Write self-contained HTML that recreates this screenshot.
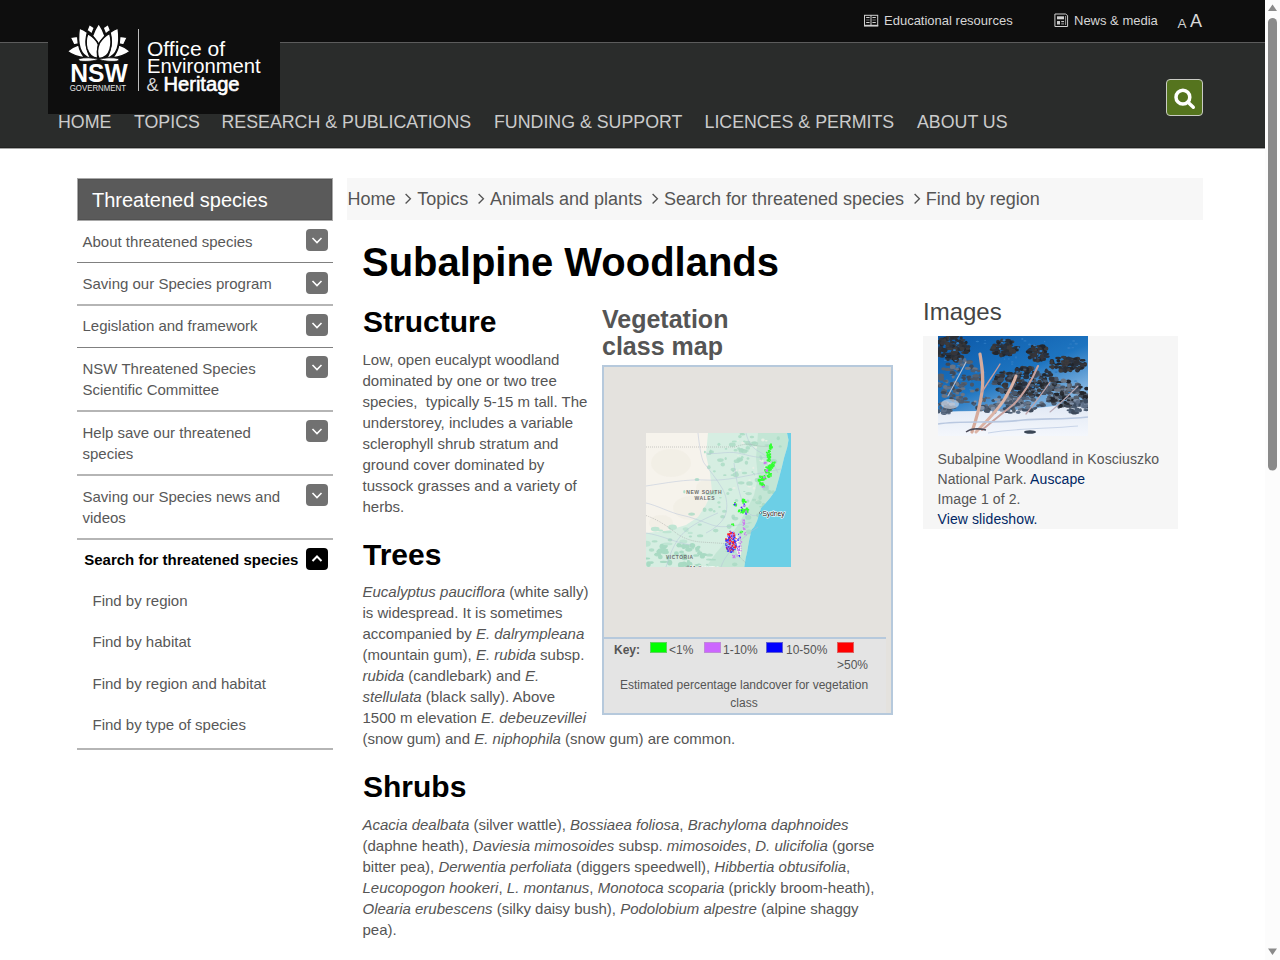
<!DOCTYPE html>
<html><head><meta charset="utf-8">
<style>
*{box-sizing:border-box;margin:0;padding:0}
html,body{width:1280px;height:960px;overflow:hidden;background:#fff}
body{position:relative;font-family:"Liberation Sans",sans-serif;color:#555}
.abs{position:absolute}
#topbar{position:absolute;left:0;top:0;width:1265px;height:42px;background:#0e0e0e}
#nav{position:absolute;left:0;top:42px;width:1265px;height:106px;background:#2a2c2b;border-top:1px solid #5c5c5c;border-bottom:1px solid #212221;box-shadow:0 1px 0 #a5a6a5}
#logo{position:absolute;left:48px;top:0;width:232px;height:114px;background:#0e0e0e}
.tl{position:absolute;top:13px;font-size:13px;color:#d6d6d6;white-space:nowrap;line-height:16px}
.nv{position:absolute;top:112px;font-size:17.8px;color:#cbcbcb;white-space:nowrap;line-height:20px;letter-spacing:0}
#search{position:absolute;left:1166px;top:79px;width:37px;height:37px;background:#55741e;border:1px solid #c9cbc4;border-radius:4px}
#scroll{position:absolute;left:1265px;top:0;width:15px;height:960px;background:#fcfcfc}
/* sidebar */
.sb{white-space:nowrap}
.si{font-size:15px;line-height:21.43px;color:#585858}
.tg{position:absolute;left:306px;width:22px;height:22px;background:#717171;border-radius:4px}
.tg svg{position:absolute;left:0;top:0}
/* breadcrumb */
#bc{position:absolute;padding-left:0.5px;left:347px;top:178px;width:855.5px;height:41.5px;background:#f7f7f7;font-size:18px;line-height:43px;color:#555;white-space:nowrap;overflow:visible}
#bc span.c{display:inline-block;width:8px;height:1px;margin:0 5px 0 8.75px;position:relative}
#bc span.c svg{position:absolute;left:0;top:-11px}
h1{position:absolute;left:362px;top:236px;font-size:40px;line-height:50px;color:#000;font-weight:bold;white-space:nowrap}
.h2{position:absolute;font-size:30px;line-height:33px;color:#000;font-weight:bold;white-space:nowrap}
.p{position:absolute;font-size:15px;line-height:21px;color:#555}
.p i{font-style:italic}
#mapbox{position:absolute;left:602px;top:365px;width:291px;height:350px;border:2px solid #b6c9dc;background:#e4e2de}
#legend{position:absolute;left:0;top:270px;width:282px;height:76px;background:#e4e4e4;border-top:2px solid #b6c9dc}
.h3{position:absolute;font-size:25px;line-height:27px;color:#555;font-weight:bold}
#imgbox{position:absolute;left:922.5px;top:336px;width:255px;height:193px;background:#f6f6f6}
a{color:#002664;text-decoration:none}
</style></head><body>
<div id="topbar"></div>
<div id="nav"></div>
<div id="logo"></div>
<svg class="abs" style="left:62px;top:20px" width="74" height="74" viewBox="0 0 960 960">
<text x="108" y="805" font-family="Liberation Sans" font-weight="bold" font-size="335" fill="#fff" textLength="745" lengthAdjust="spacingAndGlyphs">NSW</text>
<text x="100" y="918" font-family="Liberation Sans" font-size="108" fill="#e6e6e6" textLength="730" lengthAdjust="spacingAndGlyphs">GOVERNMENT</text>
</svg>
<svg class="abs" style="left:64px;top:20px" width="70" height="44.01" viewBox="0 0 1280 805">
<g fill="#fff" stroke="#0e0e0e" stroke-width="26" stroke-linejoin="round">
<path d="M60,572 C120,520 190,480 268,455 C285,540 320,620 380,690 C260,680 150,640 60,572Z"/>
<path d="M1210,572 C1150,520 1080,480 1002,455 C985,540 950,620 890,690 C1010,680 1120,640 1210,572Z"/>
<path d="M112,318 L250,300 L262,438 L180,458Z"/>
<path d="M1158,318 L1020,300 L1008,438 L1090,458Z"/>
<path d="M635,62 C680,130 720,210 748,290 C710,340 670,390 635,440 C600,390 560,340 522,290 C550,210 590,130 635,62Z"/>
<path d="M462,80 L555,140 L510,258 L418,190Z"/>
<path d="M808,80 L715,140 L760,258 L852,190Z"/>
<path d="M280,150 C330,170 380,195 428,225 C400,330 395,450 430,560 C445,610 465,660 490,700 C400,680 330,620 295,520 C260,420 262,280 280,150Z"/>
<path d="M990,150 C940,170 890,195 842,225 C870,330 875,450 840,560 C825,610 805,660 780,700 C870,680 940,620 975,520 C1010,420 1008,280 990,150Z"/>
<path d="M435,250 C520,300 600,370 628,450 C615,520 605,600 615,700 C520,690 450,620 420,520 C400,440 405,330 435,250Z"/>
<path d="M835,245 C860,330 870,440 840,540 C810,640 740,700 640,705 C600,620 605,520 650,420 C700,340 770,280 835,245Z"/>
</g>
<g fill="#fff" stroke="#0e0e0e" stroke-width="14">
<path d="M272,708 C380,680 520,690 628,718 C560,750 420,765 300,752 C275,745 265,725 272,708Z"/>
<path d="M998,708 C890,680 750,690 642,718 C710,750 850,765 970,752 C995,745 1005,725 998,708Z"/>
</g>
</svg>
<div class="abs" style="left:138px;top:29px;width:1px;height:62px;background:#bdbdbd"></div>
<svg class="abs" style="left:140px;top:30px" width="130" height="70" viewBox="140 30 130 70">
<text x="147" y="55.8" font-family="Liberation Sans" font-size="19.5" fill="#fff" textLength="78" lengthAdjust="spacingAndGlyphs">Office of</text>
<text x="147" y="72.9" font-family="Liberation Sans" font-size="19.5" fill="#fff" textLength="113.7" lengthAdjust="spacingAndGlyphs">Environment</text>
<text x="146.5" y="91" font-family="Liberation Sans" font-size="19" fill="#d8d8d8" textLength="12" lengthAdjust="spacingAndGlyphs">&amp;</text>
<text x="163.5" y="91" font-family="Liberation Sans" font-size="19.5" fill="#fff" stroke="#fff" stroke-width="0.6" textLength="76" lengthAdjust="spacingAndGlyphs">Heritage</text>
</svg>

<div class="tl" style="left:884px">Educational resources</div>
<div class="tl" style="left:1074px">News &amp; media</div>
<svg class="abs" style="left:864px;top:14px" width="15" height="13" viewBox="0 0 15 13">
<g fill="none" stroke="#d0d0d0" stroke-width="1">
<rect x="0.5" y="1.3" width="13.2" height="10.5"/>
<line x1="7" y1="1.3" x2="7" y2="11.8"/>
<line x1="2.2" y1="3.5" x2="5.6" y2="3.5"/><line x1="8.4" y1="3.5" x2="11.8" y2="3.5"/>
<line x1="2.2" y1="6" x2="5.6" y2="6" stroke="#777"/><line x1="8.4" y1="6" x2="11.8" y2="6" stroke="#777"/>
<line x1="2.2" y1="8.5" x2="5.6" y2="8.5"/><line x1="8.4" y1="8.5" x2="11.8" y2="8.5"/>
</g><rect x="0" y="10.8" width="14.2" height="1.6" fill="#d0d0d0"/></svg>
<svg class="abs" style="left:1054px;top:13px" width="15" height="15" viewBox="0 0 15 15">
<g fill="none" stroke="#d0d0d0" stroke-width="1">
<path d="M0.9,1 L11.5,1 L13.6,2.5 L13.6,13.5 L0.9,13.5Z"/>
<line x1="11.6" y1="3" x2="11.6" y2="12" stroke="#999"/>
</g>
<rect x="3" y="3.3" width="7" height="3" fill="#d0d0d0"/>
<rect x="3" y="8" width="3" height="3.5" fill="#c8c8c8"/>
<rect x="7.2" y="8" width="2.8" height="1.2" fill="#c0c0c0"/>
<rect x="7.2" y="10.3" width="2.8" height="1.2" fill="#909090"/>
</svg>
<div class="abs" style="left:1177.5px;top:15.5px;font-size:13.5px;line-height:16px;color:#d0d0d0">A</div>
<div class="abs" style="left:1190px;top:11px;font-size:18px;line-height:20px;color:#d8d8d8">A</div>

<div class="nv" style="left:58px">HOME</div>
<div class="nv" style="left:134px">TOPICS</div>
<div class="nv" style="left:221.5px">RESEARCH &amp; PUBLICATIONS</div>
<div class="nv" style="left:494px">FUNDING &amp; SUPPORT</div>
<div class="nv" style="left:704.5px">LICENCES &amp; PERMITS</div>
<div class="nv" style="left:917px">ABOUT US</div>
<div id="search"><svg class="abs" style="left:0;top:0" width="35" height="35" viewBox="0 0 35 35"><circle cx="15.9" cy="17.2" r="6.9" fill="none" stroke="#fff" stroke-width="3.5"/><path d="M21,22.2 L26.3,27.3" stroke="#fff" stroke-width="3.4" stroke-linecap="round"/></svg></div>

<div class="abs" style="left:77px;top:178px;width:256px;height:43px;border:1px solid #a8a8a8;background:#505050"><div class="abs" style="left:0;top:0;width:254px;height:41px;border:1px solid #525252;background:#5a5a5a"></div></div>
<div class="abs sb" style="left:92px;top:187px;font-size:20px;line-height:26px;color:#fff">Threatened species</div>
<div class="abs sb si" style="left:82.5px;top:230.57px">About threatened species</div>
<span class="tg" style="top:229.07px"><svg width="22" height="22" viewBox="0 0 22 22"><path d="M6.5,9 L11,13.5 L15.5,9" fill="none" stroke="#fff" stroke-width="1.6"/></svg></span>
<div class="abs sb si" style="left:82.5px;top:273.00px">Saving our Species program</div>
<span class="tg" style="top:271.50px"><svg width="22" height="22" viewBox="0 0 22 22"><path d="M6.5,9 L11,13.5 L15.5,9" fill="none" stroke="#fff" stroke-width="1.6"/></svg></span>
<div class="abs sb si" style="left:82.5px;top:315.43px">Legislation and framework</div>
<span class="tg" style="top:313.93px"><svg width="22" height="22" viewBox="0 0 22 22"><path d="M6.5,9 L11,13.5 L15.5,9" fill="none" stroke="#fff" stroke-width="1.6"/></svg></span>
<div class="abs sb si" style="left:82.5px;top:357.86px">NSW Threatened Species<br>Scientific Committee</div>
<span class="tg" style="top:356.36px"><svg width="22" height="22" viewBox="0 0 22 22"><path d="M6.5,9 L11,13.5 L15.5,9" fill="none" stroke="#fff" stroke-width="1.6"/></svg></span>
<div class="abs sb si" style="left:82.5px;top:421.72px">Help save our threatened<br>species</div>
<span class="tg" style="top:420.22px"><svg width="22" height="22" viewBox="0 0 22 22"><path d="M6.5,9 L11,13.5 L15.5,9" fill="none" stroke="#fff" stroke-width="1.6"/></svg></span>
<div class="abs sb si" style="left:82.5px;top:485.58px">Saving our Species news and<br>videos</div>
<span class="tg" style="top:484.08px"><svg width="22" height="22" viewBox="0 0 22 22"><path d="M6.5,9 L11,13.5 L15.5,9" fill="none" stroke="#fff" stroke-width="1.6"/></svg></span>
<div class="abs sb si" style="left:84.2px;top:549.44px;font-weight:bold;color:#000">Search for threatened species</div>
<span class="tg" style="top:547.94px;background:#000"><svg width="22" height="22" viewBox="0 0 22 22"><path d="M6.5,13 L11,8.5 L15.5,13" fill="none" stroke="#fff" stroke-width="2"/></svg></span>
<div class="abs sb si" style="left:92.5px;top:590.00px">Find by region</div>
<div class="abs sb si" style="left:92.5px;top:631.43px">Find by habitat</div>
<div class="abs sb si" style="left:92.5px;top:672.86px">Find by region and habitat</div>
<div class="abs sb si" style="left:92.5px;top:714.29px">Find by type of species</div>
<div class="abs" style="left:77px;top:262px;width:256px;height:1px;background:#808080"></div>
<div class="abs" style="left:77px;top:304px;width:256px;height:2px;background:#b5b5b5"></div>
<div class="abs" style="left:77px;top:347px;width:256px;height:1px;background:#808080"></div>
<div class="abs" style="left:77px;top:410px;width:256px;height:2px;background:#b5b5b5"></div>
<div class="abs" style="left:77px;top:474px;width:256px;height:2px;background:#b5b5b5"></div>
<div class="abs" style="left:77px;top:538px;width:256px;height:2px;background:#b5b5b5"></div>
<div class="abs" style="left:77px;top:748px;width:256px;height:2px;background:#b5b5b5"></div>

<div id="bc">Home<span class="c"><svg width="10" height="12" viewBox="0 0 10 12"><path d="M1.6,1 L6.4,5.75 L1.6,10.5" fill="none" stroke="#555" stroke-width="1.35"/></svg></span>Topics<span class="c"><svg width="10" height="12" viewBox="0 0 10 12"><path d="M1.6,1 L6.4,5.75 L1.6,10.5" fill="none" stroke="#555" stroke-width="1.35"/></svg></span>Animals and plants<span class="c"><svg width="10" height="12" viewBox="0 0 10 12"><path d="M1.6,1 L6.4,5.75 L1.6,10.5" fill="none" stroke="#555" stroke-width="1.35"/></svg></span>Search for threatened species<span class="c"><svg width="10" height="12" viewBox="0 0 10 12"><path d="M1.6,1 L6.4,5.75 L1.6,10.5" fill="none" stroke="#555" stroke-width="1.35"/></svg></span>Find by region</div>

<h1 style="top:237px">Subalpine Woodlands</h1>
<div class="h2" style="left:363px;top:305px">Structure</div>
<div class="p" style="left:362.5px;top:348.5px;width:232px">Low, open eucalypt woodland dominated by one or two tree species,&nbsp; typically 5-15 m tall. The understorey, includes a variable sclerophyll shrub stratum and ground cover dominated by tussock grasses and a variety of herbs.</div>
<div class="h3" style="left:602px;top:306px;width:290px">Vegetation<br>class map</div>
<div id="mapbox"><svg class="abs" style="left:41.5px;top:65.5px" width="145" height="134" viewBox="0 0 145 134"><rect width="145" height="134" fill="#f6f3ec"/>
<ellipse cx="25" cy="30" rx="20" ry="14" fill="#f0ece2" opacity="0.6"/>
<ellipse cx="45" cy="75" rx="18" ry="12" fill="#f0ece2" opacity="0.6"/>
<ellipse cx="15" cy="90" rx="12" ry="8" fill="#f0ece2" opacity="0.6"/>
<ellipse cx="60" cy="55" rx="10" ry="8" fill="#f0ece2" opacity="0.6"/>
<ellipse cx="75" cy="20" rx="12" ry="6" fill="#f0ece2" opacity="0.6"/>
<path d="M62,0 L141,0 L142.5,7 L141.2,14.2 L138,25 L136.2,32.5 L133,45 L129.5,57.5 L124,65 L118,72 L115,75 L113.5,80 L111,88 L108,94 L105.5,96.7 L103,108 L101.2,118.5 L99.5,126 L98.3,134 L0,134 L0,100 L20,98 L40,92 L52,84 L60,72 L66,58 L64,40 L60,22Z" fill="#d6eee2"/>
<path d="M112,0 L141,0 L142.5,7 L141.2,14.2 L138,25 L136.2,32.5 L133,45 L129.5,57.5 L124,65 L118,72 L115,75 L113.5,80 L111,88 L108,94 L105.5,96.7 L103,108 L101.2,118.5 L99.5,126 L98.3,134 L60,134 L70,120 L82,106 L92,92 L100,78 L108,62 L112,45 L110,25Z" fill="#b5e0cb" opacity="0.55"/>
<ellipse cx="14.3" cy="124.0" rx="2.4" ry="2.2" fill="#a8dac3"/>
<ellipse cx="37.5" cy="113.4" rx="1.5" ry="2.7" fill="#a8dac3"/>
<ellipse cx="15.6" cy="117.2" rx="4.0" ry="1.9" fill="#a8dac3"/>
<ellipse cx="50.2" cy="122.5" rx="3.1" ry="1.3" fill="#a8dac3"/>
<ellipse cx="38.1" cy="131.1" rx="2.8" ry="2.5" fill="#a8dac3"/>
<ellipse cx="40.3" cy="113.4" rx="3.4" ry="2.2" fill="#a8dac3"/>
<ellipse cx="18.1" cy="112.7" rx="3.7" ry="1.9" fill="#a8dac3"/>
<ellipse cx="43.1" cy="131.3" rx="3.3" ry="2.8" fill="#a8dac3"/>
<ellipse cx="23.7" cy="129.6" rx="2.6" ry="2.9" fill="#a8dac3"/>
<ellipse cx="52.7" cy="114.1" rx="1.8" ry="1.4" fill="#a8dac3"/>
<ellipse cx="57.9" cy="121.6" rx="3.1" ry="1.6" fill="#a8dac3"/>
<ellipse cx="30.4" cy="120.5" rx="2.4" ry="2.2" fill="#a8dac3"/>
<ellipse cx="35.1" cy="131.9" rx="3.2" ry="2.9" fill="#a8dac3"/>
<ellipse cx="51.4" cy="133.8" rx="3.2" ry="1.3" fill="#a8dac3"/>
<ellipse cx="51.6" cy="133.2" rx="3.8" ry="2.1" fill="#a8dac3"/>
<ellipse cx="42.8" cy="116.6" rx="3.6" ry="2.1" fill="#a8dac3"/>
<ellipse cx="17.1" cy="113.4" rx="3.6" ry="3.0" fill="#a8dac3"/>
<ellipse cx="5.3" cy="129.6" rx="2.5" ry="1.3" fill="#a8dac3"/>
<ellipse cx="17.6" cy="128.9" rx="3.7" ry="1.1" fill="#a8dac3"/>
<ellipse cx="36.9" cy="113.0" rx="3.3" ry="1.7" fill="#a8dac3"/>
<ellipse cx="52.9" cy="133.6" rx="2.8" ry="3.0" fill="#a8dac3"/>
<ellipse cx="18.6" cy="113.7" rx="3.0" ry="1.1" fill="#a8dac3"/>
<ellipse cx="11.8" cy="121.0" rx="3.0" ry="1.3" fill="#a8dac3"/>
<ellipse cx="2.5" cy="131.1" rx="2.3" ry="2.9" fill="#a8dac3"/>
<ellipse cx="53.8" cy="120.3" rx="2.7" ry="2.0" fill="#a8dac3"/>
<ellipse cx="38.6" cy="125.1" rx="2.9" ry="2.2" fill="#a8dac3"/>
<ellipse cx="56.4" cy="123.2" rx="2.6" ry="2.4" fill="#a8dac3"/>
<ellipse cx="14.3" cy="118.6" rx="3.9" ry="2.0" fill="#a8dac3"/>
<ellipse cx="32.9" cy="112.3" rx="2.5" ry="2.2" fill="#a8dac3"/>
<ellipse cx="1.2" cy="125.5" rx="3.1" ry="1.1" fill="#a8dac3"/>
<ellipse cx="37.6" cy="122.3" rx="3.2" ry="1.7" fill="#a8dac3"/>
<ellipse cx="42.4" cy="128.2" rx="1.6" ry="1.1" fill="#a8dac3"/>
<ellipse cx="40.6" cy="133.2" rx="2.1" ry="1.9" fill="#a8dac3"/>
<ellipse cx="35.6" cy="119.0" rx="2.4" ry="1.6" fill="#a8dac3"/>
<ellipse cx="22.1" cy="125.1" rx="2.3" ry="1.8" fill="#a8dac3"/>
<ellipse cx="46.3" cy="112.6" rx="2.9" ry="2.5" fill="#a8dac3"/>
<ellipse cx="18.6" cy="116.9" rx="3.5" ry="1.5" fill="#a8dac3"/>
<ellipse cx="11.2" cy="121.6" rx="3.2" ry="1.2" fill="#a8dac3"/>
<ellipse cx="19.3" cy="119.3" rx="3.6" ry="1.9" fill="#a8dac3"/>
<ellipse cx="51.3" cy="115.7" rx="2.3" ry="2.3" fill="#a8dac3"/>
<ellipse cx="44.2" cy="99.9" rx="2.7" ry="1.2" fill="#bfe5d3"/>
<ellipse cx="26.5" cy="94.2" rx="4.4" ry="2.7" fill="#bfe5d3"/>
<ellipse cx="9.2" cy="96.1" rx="4.4" ry="2.3" fill="#bfe5d3"/>
<ellipse cx="40.3" cy="97.6" rx="2.4" ry="1.6" fill="#bfe5d3"/>
<ellipse cx="39.7" cy="96.0" rx="3.0" ry="1.8" fill="#bfe5d3"/>
<ellipse cx="21.0" cy="99.0" rx="4.8" ry="1.3" fill="#bfe5d3"/>
<ellipse cx="0.2" cy="110.8" rx="4.6" ry="3.0" fill="#bfe5d3"/>
<ellipse cx="21.7" cy="110.9" rx="4.8" ry="1.4" fill="#bfe5d3"/>
<ellipse cx="37.3" cy="108.4" rx="4.0" ry="2.0" fill="#bfe5d3"/>
<ellipse cx="14.5" cy="97.5" rx="2.7" ry="1.1" fill="#bfe5d3"/>
<ellipse cx="103.9" cy="89.7" rx="2.0" ry="0.6" fill="#b2e0ca"/>
<ellipse cx="89.6" cy="17.2" rx="2.1" ry="1.3" fill="#b2e0ca"/>
<ellipse cx="68.2" cy="78.2" rx="1.2" ry="1.3" fill="#b2e0ca"/>
<ellipse cx="95.3" cy="17.1" rx="2.6" ry="1.7" fill="#b2e0ca"/>
<ellipse cx="95.9" cy="0.8" rx="2.5" ry="0.7" fill="#b2e0ca"/>
<ellipse cx="98.4" cy="8.6" rx="1.4" ry="1.0" fill="#b2e0ca"/>
<ellipse cx="58.9" cy="19.1" rx="1.0" ry="1.4" fill="#b2e0ca"/>
<ellipse cx="87.3" cy="38.0" rx="1.2" ry="1.1" fill="#b2e0ca"/>
<ellipse cx="78.4" cy="78.3" rx="2.4" ry="1.5" fill="#b2e0ca"/>
<ellipse cx="86.2" cy="42.1" rx="1.7" ry="0.9" fill="#b2e0ca"/>
<ellipse cx="72.9" cy="69.5" rx="1.6" ry="1.2" fill="#b2e0ca"/>
<ellipse cx="100.4" cy="93.6" rx="2.6" ry="1.7" fill="#b2e0ca"/>
<ellipse cx="51.0" cy="46.4" rx="2.4" ry="1.5" fill="#b2e0ca"/>
<ellipse cx="101.0" cy="79.2" rx="2.3" ry="1.4" fill="#b2e0ca"/>
<ellipse cx="38.3" cy="58.8" rx="1.1" ry="1.7" fill="#b2e0ca"/>
<ellipse cx="100.4" cy="17.9" rx="2.5" ry="0.8" fill="#b2e0ca"/>
<ellipse cx="97.5" cy="67.4" rx="2.7" ry="1.4" fill="#b2e0ca"/>
<ellipse cx="93.9" cy="3.6" rx="1.8" ry="1.6" fill="#b2e0ca"/>
<ellipse cx="96.2" cy="24.2" rx="1.3" ry="1.5" fill="#b2e0ca"/>
<ellipse cx="90.3" cy="39.4" rx="1.6" ry="1.1" fill="#b2e0ca"/>
<ellipse cx="107.8" cy="41.3" rx="1.1" ry="1.6" fill="#b2e0ca"/>
<ellipse cx="90.5" cy="67.4" rx="1.8" ry="1.5" fill="#b2e0ca"/>
<ellipse cx="101.8" cy="14.9" rx="2.3" ry="1.9" fill="#b2e0ca"/>
<ellipse cx="76.8" cy="31.5" rx="2.2" ry="1.9" fill="#b2e0ca"/>
<ellipse cx="98.3" cy="58.5" rx="1.2" ry="0.6" fill="#b2e0ca"/>
<ellipse cx="68.4" cy="38.3" rx="1.5" ry="1.1" fill="#b2e0ca"/>
<ellipse cx="68.4" cy="59.9" rx="2.5" ry="1.8" fill="#b2e0ca"/>
<ellipse cx="98.5" cy="40.0" rx="2.7" ry="1.3" fill="#b2e0ca"/>
<ellipse cx="102.0" cy="25.5" rx="1.4" ry="1.2" fill="#b2e0ca"/>
<ellipse cx="88.3" cy="8.6" rx="2.5" ry="1.0" fill="#b2e0ca"/>
<ellipse cx="106.4" cy="39.1" rx="1.0" ry="1.0" fill="#b2e0ca"/>
<ellipse cx="94.5" cy="26.6" rx="2.7" ry="1.5" fill="#b2e0ca"/>
<ellipse cx="72.9" cy="11.3" rx="1.5" ry="1.6" fill="#b2e0ca"/>
<ellipse cx="84.3" cy="56.6" rx="2.1" ry="1.5" fill="#b2e0ca"/>
<ellipse cx="74.4" cy="64.7" rx="1.4" ry="0.8" fill="#b2e0ca"/>
<ellipse cx="73.5" cy="74.0" rx="1.3" ry="1.1" fill="#b2e0ca"/>
<ellipse cx="120.3" cy="7.7" rx="1.4" ry="0.8" fill="#e8efe6"/>
<ellipse cx="116.4" cy="28.0" rx="1.2" ry="1.0" fill="#e8efe6"/>
<ellipse cx="108.0" cy="55.2" rx="1.2" ry="1.4" fill="#e8efe6"/>
<ellipse cx="92.1" cy="22.6" rx="0.9" ry="0.7" fill="#e8efe6"/>
<ellipse cx="116.8" cy="52.3" rx="1.0" ry="0.8" fill="#e8efe6"/>
<ellipse cx="103.4" cy="53.3" rx="1.8" ry="1.3" fill="#e8efe6"/>
<ellipse cx="109.9" cy="14.5" rx="1.3" ry="0.8" fill="#e8efe6"/>
<ellipse cx="107.5" cy="41.9" rx="1.0" ry="0.8" fill="#e8efe6"/>
<ellipse cx="116.9" cy="7.0" rx="1.8" ry="1.4" fill="#e8efe6"/>
<ellipse cx="123.1" cy="29.9" rx="1.5" ry="1.1" fill="#e8efe6"/>
<ellipse cx="111.4" cy="68.5" rx="1.6" ry="0.9" fill="#e8efe6"/>
<ellipse cx="119.8" cy="36.5" rx="1.5" ry="1.3" fill="#e8efe6"/>
<ellipse cx="88.1" cy="55.1" rx="1.6" ry="1.0" fill="#e8efe6"/>
<ellipse cx="107.4" cy="34.9" rx="1.0" ry="1.1" fill="#e8efe6"/>
<ellipse cx="89.4" cy="37.5" rx="1.6" ry="1.0" fill="#e8efe6"/>
<ellipse cx="108.9" cy="67.3" rx="1.9" ry="0.7" fill="#e8efe6"/>
<ellipse cx="117.3" cy="45.5" rx="0.9" ry="0.9" fill="#e8efe6"/>
<ellipse cx="96.6" cy="10.1" rx="1.4" ry="1.4" fill="#e8efe6"/>
<ellipse cx="100.0" cy="61.6" rx="1.6" ry="0.7" fill="#e8efe6"/>
<ellipse cx="119.8" cy="44.1" rx="1.9" ry="1.2" fill="#e8efe6"/>
<ellipse cx="115.4" cy="27.3" rx="1.8" ry="1.4" fill="#e8efe6"/>
<ellipse cx="119.9" cy="33.4" rx="1.7" ry="1.0" fill="#e8efe6"/>
<ellipse cx="92.0" cy="7.8" rx="0.9" ry="0.8" fill="#e8efe6"/>
<ellipse cx="94.0" cy="37.3" rx="1.6" ry="1.1" fill="#e8efe6"/>
<ellipse cx="103.6" cy="47.2" rx="1.2" ry="1.0" fill="#e8efe6"/>
<ellipse cx="102.6" cy="60.6" rx="3.3" ry="1.6" fill="#a9dac3" opacity="0.8"/>
<ellipse cx="101.9" cy="68.1" rx="1.5" ry="1.7" fill="#a9dac3" opacity="0.8"/>
<ellipse cx="115.3" cy="84.4" rx="1.2" ry="1.3" fill="#a9dac3" opacity="0.8"/>
<ellipse cx="121.1" cy="12.1" rx="2.7" ry="0.9" fill="#a9dac3" opacity="0.8"/>
<ellipse cx="130.2" cy="131.6" rx="2.6" ry="1.8" fill="#a9dac3" opacity="0.8"/>
<ellipse cx="63.1" cy="21.1" rx="2.3" ry="0.9" fill="#a9dac3" opacity="0.8"/>
<ellipse cx="79.7" cy="25.5" rx="1.1" ry="1.6" fill="#a9dac3" opacity="0.8"/>
<ellipse cx="123.5" cy="59.0" rx="2.3" ry="1.9" fill="#a9dac3" opacity="0.8"/>
<ellipse cx="108.2" cy="67.0" rx="2.1" ry="1.3" fill="#a9dac3" opacity="0.8"/>
<ellipse cx="134.4" cy="133.7" rx="3.1" ry="2.0" fill="#a9dac3" opacity="0.8"/>
<ellipse cx="78.8" cy="42.2" rx="1.7" ry="0.9" fill="#a9dac3" opacity="0.8"/>
<ellipse cx="54.1" cy="102.7" rx="3.1" ry="1.5" fill="#a9dac3" opacity="0.8"/>
<ellipse cx="114.4" cy="128.4" rx="1.0" ry="1.2" fill="#a9dac3" opacity="0.8"/>
<ellipse cx="63.4" cy="122.0" rx="3.5" ry="1.5" fill="#a9dac3" opacity="0.8"/>
<ellipse cx="108.0" cy="9.8" rx="2.9" ry="1.3" fill="#a9dac3" opacity="0.8"/>
<ellipse cx="86.3" cy="11.7" rx="3.4" ry="2.1" fill="#a9dac3" opacity="0.8"/>
<ellipse cx="80.0" cy="15.8" rx="1.3" ry="0.9" fill="#a9dac3" opacity="0.8"/>
<ellipse cx="24.0" cy="106.8" rx="2.4" ry="1.6" fill="#a9dac3" opacity="0.8"/>
<ellipse cx="115.4" cy="25.6" rx="1.3" ry="1.9" fill="#a9dac3" opacity="0.8"/>
<ellipse cx="92.7" cy="15.6" rx="1.5" ry="1.3" fill="#a9dac3" opacity="0.8"/>
<ellipse cx="108.5" cy="130.1" rx="1.8" ry="2.3" fill="#a9dac3" opacity="0.8"/>
<ellipse cx="90.8" cy="28.2" rx="3.1" ry="1.9" fill="#a9dac3" opacity="0.8"/>
<ellipse cx="134.2" cy="13.4" rx="1.5" ry="1.2" fill="#a9dac3" opacity="0.8"/>
<ellipse cx="44.4" cy="103.5" rx="1.7" ry="0.9" fill="#a9dac3" opacity="0.8"/>
<ellipse cx="104.5" cy="12.1" rx="1.6" ry="1.8" fill="#a9dac3" opacity="0.8"/>
<ellipse cx="95.1" cy="49.8" rx="3.4" ry="1.6" fill="#a9dac3" opacity="0.8"/>
<ellipse cx="123.2" cy="77.0" rx="1.5" ry="1.1" fill="#a9dac3" opacity="0.8"/>
<ellipse cx="110.4" cy="121.7" rx="1.6" ry="1.1" fill="#a9dac3" opacity="0.8"/>
<ellipse cx="128.6" cy="99.1" rx="1.5" ry="2.4" fill="#a9dac3" opacity="0.8"/>
<ellipse cx="81.5" cy="118.2" rx="2.1" ry="1.0" fill="#a9dac3" opacity="0.8"/>
<ellipse cx="132.3" cy="5.2" rx="1.6" ry="2.0" fill="#a9dac3" opacity="0.8"/>
<ellipse cx="122.1" cy="34.4" rx="2.5" ry="1.3" fill="#a9dac3" opacity="0.8"/>
<ellipse cx="114.6" cy="23.5" rx="1.2" ry="1.2" fill="#a9dac3" opacity="0.8"/>
<ellipse cx="122.2" cy="75.0" rx="2.5" ry="1.3" fill="#a9dac3" opacity="0.8"/>
<ellipse cx="27.5" cy="122.9" rx="1.0" ry="1.3" fill="#a9dac3" opacity="0.8"/>
<ellipse cx="66.4" cy="59.7" rx="1.4" ry="1.4" fill="#a9dac3" opacity="0.8"/>
<ellipse cx="58.6" cy="76.7" rx="1.9" ry="2.3" fill="#a9dac3" opacity="0.8"/>
<ellipse cx="88.7" cy="131.4" rx="2.7" ry="1.8" fill="#a9dac3" opacity="0.8"/>
<ellipse cx="64.6" cy="18.8" rx="1.0" ry="2.3" fill="#a9dac3" opacity="0.8"/>
<ellipse cx="131.1" cy="93.9" rx="1.1" ry="1.9" fill="#a9dac3" opacity="0.8"/>
<ellipse cx="114.2" cy="64.6" rx="1.8" ry="2.5" fill="#a9dac3" opacity="0.8"/>
<ellipse cx="101.9" cy="10.1" rx="2.8" ry="2.3" fill="#a9dac3" opacity="0.8"/>
<ellipse cx="103.0" cy="98.8" rx="3.0" ry="2.4" fill="#a9dac3" opacity="0.8"/>
<ellipse cx="112.0" cy="47.1" rx="3.3" ry="2.3" fill="#a9dac3" opacity="0.8"/>
<ellipse cx="119.7" cy="55.9" rx="3.2" ry="1.8" fill="#a9dac3" opacity="0.8"/>
<ellipse cx="76.7" cy="83.7" rx="2.5" ry="1.8" fill="#a9dac3" opacity="0.8"/>
<ellipse cx="108.7" cy="10.7" rx="3.5" ry="2.3" fill="#a9dac3" opacity="0.8"/>
<ellipse cx="69.7" cy="97.6" rx="2.8" ry="1.8" fill="#a9dac3" opacity="0.8"/>
<ellipse cx="123.2" cy="59.0" rx="1.2" ry="2.1" fill="#a9dac3" opacity="0.8"/>
<ellipse cx="105.9" cy="4.0" rx="2.2" ry="1.2" fill="#a9dac3" opacity="0.8"/>
<ellipse cx="83.1" cy="93.6" rx="2.5" ry="2.4" fill="#a9dac3" opacity="0.8"/>
<ellipse cx="62.8" cy="34.3" rx="1.8" ry="2.0" fill="#a9dac3" opacity="0.8"/>
<ellipse cx="74.4" cy="27.1" rx="3.3" ry="1.9" fill="#a9dac3" opacity="0.8"/>
<ellipse cx="127.1" cy="59.2" rx="1.8" ry="1.9" fill="#a9dac3" opacity="0.8"/>
<ellipse cx="93.5" cy="26.6" rx="3.0" ry="2.4" fill="#a9dac3" opacity="0.8"/>
<ellipse cx="51.9" cy="118.0" rx="2.5" ry="1.3" fill="#a9dac3" opacity="0.8"/>
<ellipse cx="98.2" cy="18.2" rx="3.1" ry="2.2" fill="#a9dac3" opacity="0.8"/>
<ellipse cx="129.8" cy="95.3" rx="1.7" ry="1.1" fill="#a9dac3" opacity="0.8"/>
<ellipse cx="81.8" cy="60.4" rx="1.5" ry="1.5" fill="#a9dac3" opacity="0.8"/>
<ellipse cx="87.2" cy="83.8" rx="1.8" ry="2.2" fill="#a9dac3" opacity="0.8"/>
<ellipse cx="61.1" cy="131.6" rx="1.2" ry="0.9" fill="#a9dac3" opacity="0.8"/>
<ellipse cx="5.6" cy="117.0" rx="2.8" ry="1.8" fill="#a9dac3" opacity="0.8"/>
<ellipse cx="119.8" cy="41.4" rx="1.0" ry="1.0" fill="#a9dac3" opacity="0.8"/>
<ellipse cx="63.0" cy="60.9" rx="3.1" ry="1.2" fill="#a9dac3" opacity="0.8"/>
<ellipse cx="65.4" cy="18.9" rx="2.6" ry="1.6" fill="#a9dac3" opacity="0.8"/>
<ellipse cx="102.2" cy="84.4" rx="3.0" ry="2.4" fill="#a9dac3" opacity="0.8"/>
<ellipse cx="53.7" cy="91.7" rx="2.2" ry="1.1" fill="#a9dac3" opacity="0.8"/>
<ellipse cx="96.5" cy="1.4" rx="2.8" ry="1.1" fill="#a9dac3" opacity="0.8"/>
<ellipse cx="87.2" cy="36.5" rx="2.7" ry="1.7" fill="#a9dac3" opacity="0.8"/>
<ellipse cx="112.3" cy="82.3" rx="2.0" ry="2.1" fill="#a9dac3" opacity="0.8"/>
<ellipse cx="11.8" cy="121.4" rx="3.3" ry="2.0" fill="#a9dac3" opacity="0.8"/>
<ellipse cx="95.1" cy="17.4" rx="2.6" ry="2.3" fill="#a9dac3" opacity="0.8"/>
<ellipse cx="103.5" cy="50.5" rx="3.2" ry="2.2" fill="#a9dac3" opacity="0.8"/>
<ellipse cx="62.6" cy="126.5" rx="2.6" ry="1.1" fill="#a9dac3" opacity="0.8"/>
<ellipse cx="115.7" cy="96.7" rx="2.6" ry="2.0" fill="#a9dac3" opacity="0.8"/>
<ellipse cx="127.7" cy="28.6" rx="3.5" ry="2.5" fill="#a9dac3" opacity="0.8"/>
<ellipse cx="117.5" cy="72.0" rx="1.8" ry="2.3" fill="#a9dac3" opacity="0.8"/>
<ellipse cx="47.0" cy="114.7" rx="1.2" ry="1.5" fill="#a9dac3" opacity="0.8"/>
<ellipse cx="115.2" cy="73.7" rx="2.2" ry="0.8" fill="#a9dac3" opacity="0.8"/>
<ellipse cx="8.6" cy="108.4" rx="3.0" ry="1.1" fill="#a9dac3" opacity="0.8"/>
<ellipse cx="119.5" cy="44.9" rx="1.4" ry="1.1" fill="#a9dac3" opacity="0.8"/>
<ellipse cx="112.5" cy="69.2" rx="3.1" ry="2.0" fill="#a9dac3" opacity="0.8"/>
<ellipse cx="66.5" cy="126.7" rx="3.4" ry="0.9" fill="#a9dac3" opacity="0.8"/>
<ellipse cx="100.4" cy="29.7" rx="1.7" ry="2.0" fill="#a9dac3" opacity="0.8"/>
<ellipse cx="89.2" cy="85.6" rx="3.1" ry="1.8" fill="#a9dac3" opacity="0.8"/>
<ellipse cx="89.8" cy="41.8" rx="3.1" ry="2.3" fill="#a9dac3" opacity="0.8"/>
<ellipse cx="124.1" cy="27.9" rx="3.4" ry="1.7" fill="#a9dac3" opacity="0.8"/>
<ellipse cx="64.6" cy="76.8" rx="2.3" ry="1.7" fill="#a9dac3" opacity="0.8"/>
<ellipse cx="45.6" cy="81.1" rx="3.4" ry="1.7" fill="#a9dac3" opacity="0.8"/>
<ellipse cx="120.5" cy="53.7" rx="2.4" ry="1.6" fill="#a9dac3" opacity="0.8"/>
<path d="M141,0 L145,0 L145,134 L98.3,134 L99.5,126 L101.2,118.5 L103,108 L105.5,96.7 L108,94 L111,88 L113.5,80 L115,75 L118,72 L124,65 L129.5,57.5 L133,45 L136.2,32.5 L138,25 L141.2,14.2 L142.5,7Z" fill="#6ccfe6"/>
<path d="M0,53 C20,50 40,46 60,47 C75,48 90,45 105,42 C115,40 125,38 135,36" fill="none" stroke="#b4c0d8" stroke-width="0.55" opacity="0.85"/>
<path d="M52,0 C53,10 55,25 58,30 C64,38 70,45 76,55 C80,62 82,70 80,80 C78,88 70,95 60,100" fill="none" stroke="#b4c0d8" stroke-width="0.55" opacity="0.85"/>
<path d="M0,70 C10,72 25,80 35,82 C45,84 55,88 66,92 C78,96 90,92 104,90" fill="none" stroke="#b4c0d8" stroke-width="0.55" opacity="0.85"/>
<path d="M60,20 C70,22 80,18 92,20 C102,22 112,26 125,24" fill="none" stroke="#b4c0d8" stroke-width="0.55" opacity="0.85"/>
<path d="M88,30 C90,45 92,55 96,68 C100,78 104,85 112,82" fill="none" stroke="#b4c0d8" stroke-width="0.55" opacity="0.85"/>
<path d="M20,134 C25,118 30,105 42,96 C50,90 60,85 72,80" fill="none" stroke="#b4c0d8" stroke-width="0.55" opacity="0.85"/>
<path d="M0,100 C15,102 30,110 45,112" fill="none" stroke="#b4c0d8" stroke-width="0.55" opacity="0.85"/>
<path d="M75,134 C78,125 84,118 92,110 C98,104 105,98 112,94" fill="none" stroke="#b4c0d8" stroke-width="0.55" opacity="0.85"/>
<path d="M100,0 C102,8 105,14 112,18 C120,22 128,30 132,40" fill="none" stroke="#b4c0d8" stroke-width="0.55" opacity="0.85"/>
<path d="M0,14 L89,14 C95,12 100,10 108,12 C115,14 120,13 125,14" fill="none" stroke="#9a9a9a" stroke-width="0.5" stroke-dasharray="1,1"/>
<path d="M0,82.5 C10,86 20,92 30,100 C38,106 48,108.5 54.5,109 L78.5,110.5 C88,118 95,125 99.7,130" fill="none" stroke="#9a9a9a" stroke-width="0.5" stroke-dasharray="1,1"/>
<rect x="124.0" y="11.5" width="1.2" height="1.2" fill="#33ff33"/>
<rect x="123.5" y="11.5" width="1.4" height="1.4" fill="#33ff33"/>
<rect x="123.1" y="12.7" width="1.0" height="1.0" fill="#33ff33"/>
<rect x="123.4" y="14.8" width="2.0" height="2.0" fill="#33ff33"/>
<rect x="123.8" y="13.5" width="1.7" height="1.7" fill="#33ff33"/>
<rect x="123.1" y="12.3" width="1.7" height="1.7" fill="#33ff33"/>
<rect x="123.4" y="13.5" width="1.0" height="1.0" fill="#33ff33"/>
<rect x="123.4" y="13.6" width="1.9" height="1.9" fill="#33ff33"/>
<rect x="122.8" y="14.6" width="1.0" height="1.0" fill="#33ff33"/>
<rect x="124.0" y="15.3" width="1.2" height="1.2" fill="#33ff33"/>
<rect x="123.0" y="12.2" width="1.1" height="1.1" fill="#33ff33"/>
<rect x="123.8" y="11.4" width="2.2" height="2.2" fill="#33ff33"/>
<rect x="124.2" y="10.4" width="1.6" height="1.6" fill="#33ff33"/>
<rect x="124.7" y="13.2" width="2.2" height="2.2" fill="#33ff33"/>
<rect x="122.9" y="20.3" width="2.2" height="2.2" fill="#33ff33"/>
<rect x="123.4" y="21.0" width="1.0" height="1.0" fill="#33ff33"/>
<rect x="120.7" y="19.3" width="1.6" height="1.6" fill="#33ff33"/>
<rect x="122.4" y="22.0" width="1.6" height="1.6" fill="#33ff33"/>
<rect x="123.8" y="18.0" width="1.0" height="1.0" fill="#33ff33"/>
<rect x="121.8" y="16.9" width="1.5" height="1.5" fill="#33ff33"/>
<rect x="122.3" y="21.0" width="1.6" height="1.6" fill="#33ff33"/>
<rect x="119.9" y="18.7" width="1.5" height="1.5" fill="#33ff33"/>
<rect x="122.3" y="17.0" width="2.1" height="2.1" fill="#33ff33"/>
<rect x="122.2" y="17.4" width="1.5" height="1.5" fill="#33ff33"/>
<rect x="120.6" y="21.4" width="1.6" height="1.6" fill="#33ff33"/>
<rect x="122.3" y="19.2" width="1.2" height="1.2" fill="#33ff33"/>
<rect x="121.9" y="18.3" width="1.8" height="1.8" fill="#33ff33"/>
<rect x="120.8" y="21.1" width="2.0" height="2.0" fill="#33ff33"/>
<rect x="123.7" y="23.3" width="1.5" height="1.5" fill="#33ff33"/>
<rect x="122.5" y="25.4" width="1.2" height="1.2" fill="#33ff33"/>
<rect x="121.6" y="26.7" width="1.5" height="1.5" fill="#33ff33"/>
<rect x="122.4" y="26.1" width="1.2" height="1.2" fill="#33ff33"/>
<rect x="122.2" y="25.2" width="1.3" height="1.3" fill="#33ff33"/>
<rect x="122.6" y="27.5" width="1.5" height="1.5" fill="#33ff33"/>
<rect x="122.8" y="23.3" width="1.2" height="1.2" fill="#33ff33"/>
<rect x="121.7" y="24.6" width="2.0" height="2.0" fill="#33ff33"/>
<rect x="122.4" y="24.2" width="2.1" height="2.1" fill="#33ff33"/>
<rect x="123.7" y="26.4" width="1.3" height="1.3" fill="#33ff33"/>
<rect x="120.8" y="22.9" width="2.0" height="2.0" fill="#33ff33"/>
<rect x="120.6" y="26.4" width="1.9" height="1.9" fill="#33ff33"/>
<rect x="122.9" y="23.0" width="2.0" height="2.0" fill="#33ff33"/>
<rect x="122.5" y="25.5" width="1.4" height="1.4" fill="#33ff33"/>
<rect x="125.5" y="31.2" width="1.9" height="1.9" fill="#33ff33"/>
<rect x="124.6" y="31.3" width="1.7" height="1.7" fill="#33ff33"/>
<rect x="126.5" y="33.2" width="1.1" height="1.1" fill="#33ff33"/>
<rect x="125.8" y="30.7" width="1.3" height="1.3" fill="#33ff33"/>
<rect x="126.4" y="29.0" width="1.3" height="1.3" fill="#33ff33"/>
<rect x="127.7" y="29.3" width="1.5" height="1.5" fill="#33ff33"/>
<rect x="128.0" y="28.5" width="1.6" height="1.6" fill="#33ff33"/>
<rect x="124.8" y="30.9" width="1.0" height="1.0" fill="#33ff33"/>
<rect x="126.3" y="30.9" width="1.9" height="1.9" fill="#33ff33"/>
<rect x="125.7" y="30.2" width="1.6" height="1.6" fill="#33ff33"/>
<rect x="126.2" y="28.7" width="1.5" height="1.5" fill="#33ff33"/>
<rect x="125.1" y="30.3" width="1.9" height="1.9" fill="#33ff33"/>
<rect x="127.2" y="31.2" width="1.5" height="1.5" fill="#33ff33"/>
<rect x="126.4" y="32.0" width="2.0" height="2.0" fill="#33ff33"/>
<rect x="125.1" y="33.5" width="2.1" height="2.1" fill="#33ff33"/>
<rect x="124.3" y="33.2" width="2.1" height="2.1" fill="#33ff33"/>
<rect x="121.7" y="33.9" width="1.4" height="1.4" fill="#33ff33"/>
<rect x="122.6" y="36.0" width="2.1" height="2.1" fill="#33ff33"/>
<rect x="123.2" y="31.3" width="1.6" height="1.6" fill="#33ff33"/>
<rect x="124.3" y="35.8" width="1.6" height="1.6" fill="#33ff33"/>
<rect x="123.0" y="33.9" width="2.2" height="2.2" fill="#33ff33"/>
<rect x="122.0" y="36.6" width="1.4" height="1.4" fill="#33ff33"/>
<rect x="122.3" y="34.4" width="1.3" height="1.3" fill="#33ff33"/>
<rect x="123.9" y="32.0" width="2.0" height="2.0" fill="#33ff33"/>
<rect x="122.6" y="35.4" width="2.0" height="2.0" fill="#33ff33"/>
<rect x="123.3" y="32.8" width="1.0" height="1.0" fill="#33ff33"/>
<rect x="121.7" y="32.2" width="2.1" height="2.1" fill="#33ff33"/>
<rect x="124.8" y="33.3" width="2.0" height="2.0" fill="#33ff33"/>
<rect x="118.2" y="36.0" width="1.7" height="1.7" fill="#33ff33"/>
<rect x="120.7" y="36.3" width="1.6" height="1.6" fill="#33ff33"/>
<rect x="121.9" y="34.5" width="1.6" height="1.6" fill="#33ff33"/>
<rect x="119.1" y="38.1" width="1.4" height="1.4" fill="#33ff33"/>
<rect x="119.3" y="33.4" width="1.7" height="1.7" fill="#33ff33"/>
<rect x="120.6" y="34.4" width="1.3" height="1.3" fill="#33ff33"/>
<rect x="118.3" y="37.3" width="1.2" height="1.2" fill="#33ff33"/>
<rect x="120.5" y="36.7" width="1.6" height="1.6" fill="#33ff33"/>
<rect x="121.1" y="33.6" width="1.7" height="1.7" fill="#33ff33"/>
<rect x="119.7" y="38.6" width="1.1" height="1.1" fill="#33ff33"/>
<rect x="119.6" y="38.4" width="2.1" height="2.1" fill="#33ff33"/>
<rect x="119.9" y="36.8" width="1.0" height="1.0" fill="#33ff33"/>
<rect x="121.8" y="34.3" width="1.8" height="1.8" fill="#33ff33"/>
<rect x="119.6" y="37.7" width="1.8" height="1.8" fill="#33ff33"/>
<rect x="121.5" y="42.4" width="2.1" height="2.1" fill="#33ff33"/>
<rect x="121.8" y="43.0" width="1.3" height="1.3" fill="#33ff33"/>
<rect x="120.7" y="41.9" width="2.1" height="2.1" fill="#33ff33"/>
<rect x="122.6" y="42.8" width="1.1" height="1.1" fill="#33ff33"/>
<rect x="122.0" y="38.4" width="1.8" height="1.8" fill="#33ff33"/>
<rect x="124.1" y="40.0" width="1.8" height="1.8" fill="#33ff33"/>
<rect x="122.2" y="43.4" width="1.3" height="1.3" fill="#33ff33"/>
<rect x="123.1" y="43.3" width="1.2" height="1.2" fill="#33ff33"/>
<rect x="122.7" y="40.2" width="2.2" height="2.2" fill="#33ff33"/>
<rect x="122.0" y="40.6" width="1.1" height="1.1" fill="#33ff33"/>
<rect x="121.8" y="43.7" width="1.2" height="1.2" fill="#33ff33"/>
<rect x="124.2" y="42.1" width="1.6" height="1.6" fill="#33ff33"/>
<rect x="122.7" y="39.4" width="1.2" height="1.2" fill="#33ff33"/>
<rect x="122.3" y="42.5" width="1.2" height="1.2" fill="#33ff33"/>
<rect x="115.6" y="45.1" width="1.7" height="1.7" fill="#33ff33"/>
<rect x="118.8" y="43.5" width="1.2" height="1.2" fill="#33ff33"/>
<rect x="117.0" y="44.7" width="2.1" height="2.1" fill="#33ff33"/>
<rect x="118.8" y="44.9" width="1.6" height="1.6" fill="#33ff33"/>
<rect x="115.2" y="42.7" width="1.5" height="1.5" fill="#33ff33"/>
<rect x="115.7" y="43.7" width="1.5" height="1.5" fill="#33ff33"/>
<rect x="117.6" y="42.0" width="1.7" height="1.7" fill="#33ff33"/>
<rect x="116.3" y="45.6" width="2.2" height="2.2" fill="#33ff33"/>
<rect x="117.4" y="44.8" width="1.1" height="1.1" fill="#33ff33"/>
<rect x="115.7" y="44.9" width="1.1" height="1.1" fill="#33ff33"/>
<rect x="117.7" y="44.1" width="1.5" height="1.5" fill="#33ff33"/>
<rect x="115.5" y="43.0" width="1.1" height="1.1" fill="#33ff33"/>
<rect x="116.6" y="45.4" width="1.3" height="1.3" fill="#33ff33"/>
<rect x="116.0" y="43.2" width="1.4" height="1.4" fill="#33ff33"/>
<rect x="113.0" y="42.5" width="1.9" height="1.9" fill="#33ff33"/>
<rect x="115.1" y="43.2" width="1.3" height="1.3" fill="#33ff33"/>
<rect x="113.6" y="46.2" width="1.6" height="1.6" fill="#33ff33"/>
<rect x="113.6" y="43.8" width="1.5" height="1.5" fill="#33ff33"/>
<rect x="112.2" y="45.8" width="1.6" height="1.6" fill="#33ff33"/>
<rect x="115.3" y="45.1" width="1.5" height="1.5" fill="#33ff33"/>
<rect x="114.8" y="45.8" width="2.0" height="2.0" fill="#33ff33"/>
<rect x="115.7" y="46.3" width="1.5" height="1.5" fill="#33ff33"/>
<rect x="113.0" y="46.2" width="1.7" height="1.7" fill="#33ff33"/>
<rect x="111.7" y="46.2" width="1.9" height="1.9" fill="#33ff33"/>
<rect x="115.1" y="45.4" width="1.4" height="1.4" fill="#33ff33"/>
<rect x="112.2" y="46.7" width="2.1" height="2.1" fill="#33ff33"/>
<rect x="114.4" y="46.4" width="1.4" height="1.4" fill="#33ff33"/>
<rect x="114.2" y="46.0" width="1.4" height="1.4" fill="#33ff33"/>
<rect x="115.2" y="50.5" width="1.9" height="1.9" fill="#33ff33"/>
<rect x="113.2" y="49.5" width="2.0" height="2.0" fill="#33ff33"/>
<rect x="113.7" y="51.3" width="1.1" height="1.1" fill="#33ff33"/>
<rect x="115.4" y="51.4" width="1.4" height="1.4" fill="#33ff33"/>
<rect x="115.6" y="50.8" width="2.1" height="2.1" fill="#33ff33"/>
<rect x="116.8" y="50.8" width="1.0" height="1.0" fill="#33ff33"/>
<rect x="114.6" y="50.6" width="1.2" height="1.2" fill="#33ff33"/>
<rect x="113.5" y="48.8" width="1.4" height="1.4" fill="#33ff33"/>
<rect x="116.9" y="51.8" width="1.8" height="1.8" fill="#33ff33"/>
<rect x="116.9" y="51.2" width="1.9" height="1.9" fill="#33ff33"/>
<rect x="115.4" y="50.3" width="1.6" height="1.6" fill="#33ff33"/>
<rect x="114.6" y="49.4" width="1.8" height="1.8" fill="#33ff33"/>
<rect x="116.1" y="49.3" width="1.4" height="1.4" fill="#33ff33"/>
<rect x="115.7" y="50.0" width="1.6" height="1.6" fill="#33ff33"/>
<rect x="116.1" y="53.3" width="1.2" height="1.2" fill="#cc77ee"/>
<rect x="116.9" y="52.3" width="1.3" height="1.3" fill="#cc77ee"/>
<rect x="117.3" y="53.2" width="1.4" height="1.4" fill="#cc77ee"/>
<rect x="115.6" y="53.0" width="1.5" height="1.5" fill="#cc77ee"/>
<rect x="118.2" y="28.7" width="1.6" height="1.6" fill="#cc77ee"/>
<rect x="117.7" y="29.5" width="1.7" height="1.7" fill="#cc77ee"/>
<rect x="117.8" y="29.5" width="1.1" height="1.1" fill="#cc77ee"/>
<rect x="119.0" y="29.0" width="1.7" height="1.7" fill="#cc77ee"/>
<rect x="120.6" y="36.1" width="1.6" height="1.6" fill="#cc77ee"/>
<rect x="119.4" y="36.7" width="1.7" height="1.7" fill="#cc77ee"/>
<rect x="120.5" y="37.6" width="1.2" height="1.2" fill="#cc77ee"/>
<rect x="120.2" y="37.3" width="1.6" height="1.6" fill="#cc77ee"/>
<rect x="117.8" y="43.8" width="1.2" height="1.2" fill="#cc77ee"/>
<rect x="117.2" y="44.0" width="1.6" height="1.6" fill="#cc77ee"/>
<rect x="118.2" y="43.7" width="1.2" height="1.2" fill="#cc77ee"/>
<rect x="117.3" y="44.0" width="1.1" height="1.1" fill="#cc77ee"/>
<rect x="97.0" y="67.2" width="1.9" height="1.9" fill="#33ff33"/>
<rect x="96.1" y="67.4" width="1.3" height="1.3" fill="#33ff33"/>
<rect x="97.1" y="66.0" width="2.0" height="2.0" fill="#33ff33"/>
<rect x="96.4" y="69.1" width="1.6" height="1.6" fill="#33ff33"/>
<rect x="98.6" y="68.0" width="2.0" height="2.0" fill="#33ff33"/>
<rect x="97.0" y="66.8" width="1.6" height="1.6" fill="#33ff33"/>
<rect x="95.8" y="67.2" width="2.0" height="2.0" fill="#33ff33"/>
<rect x="97.5" y="67.6" width="1.4" height="1.4" fill="#33ff33"/>
<rect x="96.0" y="65.6" width="2.2" height="2.2" fill="#33ff33"/>
<rect x="96.2" y="66.4" width="1.3" height="1.3" fill="#33ff33"/>
<rect x="98.1" y="76.4" width="1.9" height="1.9" fill="#33ff33"/>
<rect x="97.5" y="76.0" width="1.7" height="1.7" fill="#33ff33"/>
<rect x="95.2" y="77.5" width="1.2" height="1.2" fill="#33ff33"/>
<rect x="95.7" y="75.1" width="1.5" height="1.5" fill="#33ff33"/>
<rect x="95.5" y="77.3" width="2.1" height="2.1" fill="#33ff33"/>
<rect x="97.1" y="78.2" width="1.2" height="1.2" fill="#33ff33"/>
<rect x="94.8" y="76.1" width="1.9" height="1.9" fill="#33ff33"/>
<rect x="95.8" y="75.7" width="1.8" height="1.8" fill="#33ff33"/>
<rect x="97.3" y="77.4" width="2.1" height="2.1" fill="#33ff33"/>
<rect x="95.9" y="77.2" width="1.3" height="1.3" fill="#33ff33"/>
<rect x="96.5" y="78.0" width="1.3" height="1.3" fill="#33ff33"/>
<rect x="94.8" y="77.1" width="1.3" height="1.3" fill="#33ff33"/>
<rect x="95.7" y="78.5" width="2.1" height="2.1" fill="#33ff33"/>
<rect x="96.3" y="78.0" width="1.4" height="1.4" fill="#33ff33"/>
<rect x="100.7" y="75.7" width="1.8" height="1.8" fill="#33ff33"/>
<rect x="100.2" y="77.5" width="2.2" height="2.2" fill="#33ff33"/>
<rect x="100.9" y="75.7" width="1.1" height="1.1" fill="#33ff33"/>
<rect x="100.1" y="77.9" width="1.4" height="1.4" fill="#33ff33"/>
<rect x="100.0" y="74.5" width="1.8" height="1.8" fill="#33ff33"/>
<rect x="101.8" y="76.1" width="1.4" height="1.4" fill="#33ff33"/>
<rect x="99.2" y="75.7" width="1.1" height="1.1" fill="#33ff33"/>
<rect x="99.9" y="76.1" width="1.9" height="1.9" fill="#33ff33"/>
<rect x="97.7" y="75.9" width="2.0" height="2.0" fill="#33ff33"/>
<rect x="100.1" y="78.0" width="1.7" height="1.7" fill="#33ff33"/>
<rect x="88.7" y="71.3" width="2.2" height="2.2" fill="#33ff33"/>
<rect x="86.9" y="71.1" width="1.2" height="1.2" fill="#33ff33"/>
<rect x="88.0" y="69.3" width="1.2" height="1.2" fill="#33ff33"/>
<rect x="89.1" y="70.9" width="1.8" height="1.8" fill="#33ff33"/>
<rect x="89.2" y="70.6" width="1.9" height="1.9" fill="#33ff33"/>
<rect x="88.2" y="69.0" width="1.8" height="1.8" fill="#33ff33"/>
<rect x="93.8" y="79.4" width="1.0" height="1.0" fill="#33ff33"/>
<rect x="93.4" y="76.1" width="1.0" height="1.0" fill="#33ff33"/>
<rect x="92.1" y="76.8" width="2.2" height="2.2" fill="#33ff33"/>
<rect x="95.0" y="77.8" width="1.0" height="1.0" fill="#33ff33"/>
<rect x="95.4" y="76.4" width="1.8" height="1.8" fill="#33ff33"/>
<rect x="91.8" y="77.9" width="1.4" height="1.4" fill="#33ff33"/>
<rect x="94.6" y="78.5" width="1.5" height="1.5" fill="#33ff33"/>
<rect x="92.1" y="76.8" width="1.3" height="1.3" fill="#33ff33"/>
<rect x="97.7" y="73.0" width="1.0" height="1.0" fill="#3333ff"/>
<rect x="97.7" y="71.5" width="1.4" height="1.4" fill="#3333ff"/>
<rect x="97.8" y="70.5" width="1.2" height="1.2" fill="#3333ff"/>
<rect x="97.8" y="70.8" width="0.9" height="0.9" fill="#3333ff"/>
<rect x="97.8" y="71.8" width="1.5" height="1.5" fill="#cc77ee"/>
<rect x="97.8" y="72.1" width="1.6" height="1.6" fill="#cc77ee"/>
<rect x="100.1" y="80.9" width="1.0" height="1.0" fill="#cc77ee"/>
<rect x="99.1" y="79.5" width="1.0" height="1.0" fill="#3333ff"/>
<rect x="100.0" y="79.4" width="1.3" height="1.3" fill="#cc77ee"/>
<rect x="99.4" y="77.4" width="1.5" height="1.5" fill="#cc77ee"/>
<rect x="99.4" y="80.2" width="1.5" height="1.5" fill="#3333ff"/>
<rect x="99.8" y="80.6" width="0.9" height="0.9" fill="#cc77ee"/>
<rect x="88.2" y="71.5" width="0.9" height="0.9" fill="#cc77ee"/>
<rect x="89.0" y="71.2" width="1.1" height="1.1" fill="#cc77ee"/>
<rect x="88.6" y="69.9" width="1.3" height="1.3" fill="#cc77ee"/>
<rect x="88.1" y="70.4" width="1.2" height="1.2" fill="#cc77ee"/>
<rect x="87.9" y="71.2" width="1.2" height="1.2" fill="#3333ff"/>
<rect x="88.0" y="70.7" width="1.6" height="1.6" fill="#3333ff"/>
<rect x="95.1" y="77.1" width="1.0" height="1.0" fill="#3333ff"/>
<rect x="95.6" y="74.7" width="0.9" height="0.9" fill="#3333ff"/>
<rect x="95.4" y="73.5" width="1.2" height="1.2" fill="#cc77ee"/>
<rect x="95.1" y="73.8" width="1.3" height="1.3" fill="#cc77ee"/>
<rect x="95.0" y="74.9" width="0.9" height="0.9" fill="#cc77ee"/>
<rect x="94.7" y="73.8" width="1.2" height="1.2" fill="#3333ff"/>
<rect x="97.8" y="86.7" width="1.1" height="1.1" fill="#cc77ee"/>
<rect x="97.2" y="86.5" width="1.5" height="1.5" fill="#cc77ee"/>
<rect x="96.2" y="88.5" width="1.0" height="1.0" fill="#cc77ee"/>
<rect x="97.7" y="88.4" width="1.4" height="1.4" fill="#cc77ee"/>
<rect x="96.3" y="86.6" width="0.9" height="0.9" fill="#cc77ee"/>
<rect x="85.1" y="91.0" width="1.2" height="1.2" fill="#33ff33"/>
<rect x="85.4" y="90.4" width="0.8" height="0.8" fill="#33ff33"/>
<rect x="86.4" y="90.4" width="1.5" height="1.5" fill="#33ff33"/>
<rect x="86.4" y="90.7" width="1.4" height="1.4" fill="#33ff33"/>
<rect x="86.7" y="91.5" width="1.6" height="1.6" fill="#33ff33"/>
<rect x="97.2" y="94.5" width="1.1" height="1.1" fill="#cc77ee"/>
<rect x="98.3" y="95.6" width="1.3" height="1.3" fill="#cc77ee"/>
<rect x="97.1" y="95.3" width="1.5" height="1.5" fill="#cc77ee"/>
<rect x="96.7" y="94.3" width="1.1" height="1.1" fill="#cc77ee"/>
<rect x="97.9" y="95.2" width="1.0" height="1.0" fill="#cc77ee"/>
<rect x="97.1" y="90.0" width="1.0" height="1.0" fill="#cc77ee"/>
<rect x="96.7" y="91.9" width="1.1" height="1.1" fill="#cc77ee"/>
<rect x="96.7" y="89.2" width="1.0" height="1.0" fill="#cc77ee"/>
<rect x="97.5" y="90.3" width="1.5" height="1.5" fill="#cc77ee"/>
<rect x="97.5" y="89.7" width="1.5" height="1.5" fill="#cc77ee"/>
<rect x="94.7" y="97.6" width="1.0" height="1.0" fill="#33ff33"/>
<rect x="95.6" y="98.0" width="1.5" height="1.5" fill="#33ff33"/>
<rect x="93.7" y="98.6" width="1.2" height="1.2" fill="#33ff33"/>
<rect x="94.1" y="99.0" width="1.6" height="1.6" fill="#33ff33"/>
<rect x="93.8" y="98.7" width="1.1" height="1.1" fill="#33ff33"/>
<rect x="99.6" y="101.3" width="1.1" height="1.1" fill="#cc77ee"/>
<rect x="98.9" y="99.2" width="1.0" height="1.0" fill="#cc77ee"/>
<rect x="98.1" y="100.2" width="0.9" height="0.9" fill="#cc77ee"/>
<rect x="98.1" y="101.0" width="1.1" height="1.1" fill="#cc77ee"/>
<rect x="98.8" y="99.4" width="0.9" height="0.9" fill="#cc77ee"/>
<path d="M91,102 C94,108 96,115 95,122 L93,124 C90,120 90,110 89,104Z" fill="#f3f1ea"/>
<rect x="83.6" y="107.8" width="1.3" height="1.3" fill="#cc77ee"/>
<rect x="86.8" y="108.5" width="0.9" height="0.9" fill="#3333ff"/>
<rect x="81.0" y="115.9" width="1.2" height="1.2" fill="#3333ff"/>
<rect x="85.5" y="115.4" width="1.3" height="1.3" fill="#ff2222"/>
<rect x="83.8" y="97.8" width="1.2" height="1.2" fill="#3333ff"/>
<rect x="80.6" y="108.5" width="1.3" height="1.3" fill="#ff2222"/>
<rect x="86.6" y="118.5" width="1.0" height="1.0" fill="#3333ff"/>
<rect x="86.7" y="117.2" width="1.1" height="1.1" fill="#ff2222"/>
<rect x="84.2" y="109.0" width="1.1" height="1.1" fill="#ff2222"/>
<rect x="88.4" y="100.9" width="0.9" height="0.9" fill="#cc77ee"/>
<rect x="86.6" y="115.9" width="1.4" height="1.4" fill="#ff2222"/>
<rect x="83.9" y="98.3" width="1.8" height="1.8" fill="#cc77ee"/>
<rect x="87.4" y="102.8" width="1.0" height="1.0" fill="#ff2222"/>
<rect x="83.3" y="104.2" width="1.0" height="1.0" fill="#ff2222"/>
<rect x="84.0" y="106.9" width="1.1" height="1.1" fill="#cc77ee"/>
<rect x="87.9" y="110.0" width="1.7" height="1.7" fill="#3333ff"/>
<rect x="82.4" y="114.6" width="1.8" height="1.8" fill="#ff2222"/>
<rect x="85.0" y="99.4" width="0.9" height="0.9" fill="#3333ff"/>
<rect x="83.2" y="100.1" width="0.9" height="0.9" fill="#3333ff"/>
<rect x="80.2" y="112.0" width="1.2" height="1.2" fill="#3333ff"/>
<rect x="80.0" y="107.3" width="1.0" height="1.0" fill="#ff2222"/>
<rect x="86.3" y="103.9" width="1.1" height="1.1" fill="#3333ff"/>
<rect x="81.1" y="106.4" width="1.6" height="1.6" fill="#3333ff"/>
<rect x="79.8" y="107.2" width="1.2" height="1.2" fill="#ff2222"/>
<rect x="81.8" y="116.4" width="1.1" height="1.1" fill="#ff2222"/>
<rect x="89.0" y="113.0" width="1.6" height="1.6" fill="#3333ff"/>
<rect x="79.1" y="111.3" width="1.4" height="1.4" fill="#3333ff"/>
<rect x="88.4" y="104.4" width="0.9" height="0.9" fill="#ff2222"/>
<rect x="83.1" y="109.2" width="1.5" height="1.5" fill="#3333ff"/>
<rect x="82.0" y="101.1" width="1.5" height="1.5" fill="#cc77ee"/>
<rect x="79.6" y="106.1" width="1.6" height="1.6" fill="#3333ff"/>
<rect x="87.7" y="99.5" width="1.0" height="1.0" fill="#ff2222"/>
<rect x="86.2" y="99.4" width="1.3" height="1.3" fill="#3333ff"/>
<rect x="85.3" y="113.9" width="1.0" height="1.0" fill="#3333ff"/>
<rect x="86.5" y="105.0" width="1.8" height="1.8" fill="#3333ff"/>
<rect x="82.4" y="104.5" width="1.5" height="1.5" fill="#ff2222"/>
<rect x="83.1" y="116.8" width="1.6" height="1.6" fill="#ff2222"/>
<rect x="88.0" y="108.4" width="1.3" height="1.3" fill="#ff2222"/>
<rect x="87.9" y="103.6" width="1.6" height="1.6" fill="#3333ff"/>
<rect x="81.4" y="102.4" width="1.3" height="1.3" fill="#3333ff"/>
<rect x="81.8" y="109.3" width="1.1" height="1.1" fill="#ff2222"/>
<rect x="81.8" y="114.5" width="1.2" height="1.2" fill="#ff2222"/>
<rect x="86.0" y="115.2" width="1.2" height="1.2" fill="#3333ff"/>
<rect x="86.9" y="101.7" width="1.1" height="1.1" fill="#3333ff"/>
<rect x="83.3" y="106.2" width="1.6" height="1.6" fill="#3333ff"/>
<rect x="83.0" y="102.7" width="1.4" height="1.4" fill="#3333ff"/>
<rect x="84.2" y="118.4" width="1.6" height="1.6" fill="#3333ff"/>
<rect x="81.6" y="113.4" width="1.5" height="1.5" fill="#cc77ee"/>
<rect x="89.1" y="111.9" width="1.7" height="1.7" fill="#3333ff"/>
<rect x="89.0" y="113.5" width="1.3" height="1.3" fill="#ff2222"/>
<rect x="85.9" y="111.5" width="1.6" height="1.6" fill="#ff2222"/>
<rect x="83.3" y="109.5" width="1.5" height="1.5" fill="#cc77ee"/>
<rect x="84.4" y="99.1" width="1.7" height="1.7" fill="#ff2222"/>
<rect x="89.5" y="105.0" width="1.1" height="1.1" fill="#ff2222"/>
<rect x="87.6" y="101.6" width="1.7" height="1.7" fill="#3333ff"/>
<rect x="81.8" y="114.4" width="1.6" height="1.6" fill="#cc77ee"/>
<rect x="82.0" y="113.1" width="1.5" height="1.5" fill="#3333ff"/>
<rect x="81.4" y="115.6" width="1.1" height="1.1" fill="#3333ff"/>
<rect x="81.9" y="108.7" width="1.4" height="1.4" fill="#cc77ee"/>
<rect x="89.1" y="107.1" width="1.4" height="1.4" fill="#cc77ee"/>
<rect x="85.8" y="105.2" width="1.6" height="1.6" fill="#ff2222"/>
<rect x="89.2" y="107.8" width="1.3" height="1.3" fill="#3333ff"/>
<rect x="82.9" y="110.6" width="1.7" height="1.7" fill="#3333ff"/>
<rect x="81.3" y="115.9" width="1.1" height="1.1" fill="#cc77ee"/>
<rect x="81.5" y="100.8" width="1.0" height="1.0" fill="#ff2222"/>
<rect x="81.2" y="107.5" width="1.8" height="1.8" fill="#3333ff"/>
<rect x="84.6" y="102.7" width="1.1" height="1.1" fill="#cc77ee"/>
<rect x="82.8" y="104.1" width="1.5" height="1.5" fill="#3333ff"/>
<rect x="85.0" y="118.6" width="1.1" height="1.1" fill="#3333ff"/>
<rect x="81.3" y="100.4" width="1.8" height="1.8" fill="#ff2222"/>
<rect x="79.2" y="107.6" width="0.9" height="0.9" fill="#3333ff"/>
<rect x="79.8" y="113.4" width="1.8" height="1.8" fill="#3333ff"/>
<rect x="79.3" y="105.3" width="1.2" height="1.2" fill="#ff2222"/>
<rect x="87.2" y="114.1" width="1.1" height="1.1" fill="#3333ff"/>
<rect x="85.5" y="101.1" width="1.6" height="1.6" fill="#cc77ee"/>
<rect x="84.1" y="113.6" width="1.5" height="1.5" fill="#3333ff"/>
<rect x="84.9" y="99.0" width="1.0" height="1.0" fill="#ff2222"/>
<rect x="88.5" y="109.0" width="1.3" height="1.3" fill="#ff2222"/>
<rect x="81.1" y="105.9" width="1.0" height="1.0" fill="#cc77ee"/>
<rect x="82.4" y="117.5" width="1.2" height="1.2" fill="#3333ff"/>
<rect x="82.9" y="109.9" width="1.8" height="1.8" fill="#ff2222"/>
<rect x="82.7" y="101.6" width="1.6" height="1.6" fill="#ff2222"/>
<rect x="79.4" y="105.5" width="1.4" height="1.4" fill="#ff2222"/>
<rect x="83.7" y="117.1" width="1.1" height="1.1" fill="#ff2222"/>
<rect x="85.3" y="106.7" width="1.0" height="1.0" fill="#3333ff"/>
<rect x="86.9" y="108.5" width="1.1" height="1.1" fill="#ff2222"/>
<rect x="84.9" y="112.5" width="1.6" height="1.6" fill="#3333ff"/>
<rect x="81.5" y="113.3" width="0.9" height="0.9" fill="#ff2222"/>
<rect x="85.3" y="103.7" width="1.6" height="1.6" fill="#cc77ee"/>
<rect x="84.9" y="104.9" width="1.0" height="1.0" fill="#ff2222"/>
<rect x="81.4" y="105.9" width="1.6" height="1.6" fill="#3333ff"/>
<rect x="85.2" y="112.5" width="1.5" height="1.5" fill="#ff2222"/>
<rect x="87.4" y="103.3" width="1.0" height="1.0" fill="#3333ff"/>
<rect x="85.0" y="115.9" width="1.3" height="1.3" fill="#ff2222"/>
<rect x="86.4" y="104.9" width="1.2" height="1.2" fill="#ff2222"/>
<rect x="87.7" y="102.4" width="1.0" height="1.0" fill="#3333ff"/>
<rect x="86.0" y="108.8" width="1.6" height="1.6" fill="#ff2222"/>
<rect x="87.4" y="100.4" width="1.4" height="1.4" fill="#ff2222"/>
<rect x="83.0" y="100.6" width="1.3" height="1.3" fill="#ff2222"/>
<rect x="83.3" y="115.3" width="1.4" height="1.4" fill="#3333ff"/>
<rect x="88.2" y="115.8" width="1.4" height="1.4" fill="#3333ff"/>
<rect x="86.2" y="104.9" width="1.7" height="1.7" fill="#3333ff"/>
<rect x="84.0" y="112.1" width="1.6" height="1.6" fill="#cc77ee"/>
<rect x="87.5" y="109.3" width="1.6" height="1.6" fill="#3333ff"/>
<rect x="80.4" y="113.1" width="1.0" height="1.0" fill="#cc77ee"/>
<rect x="89.8" y="110.5" width="1.1" height="1.1" fill="#3333ff"/>
<rect x="86.6" y="98.6" width="1.3" height="1.3" fill="#cc77ee"/>
<rect x="83.2" y="118.2" width="1.0" height="1.0" fill="#ff2222"/>
<rect x="83.0" y="106.6" width="1.7" height="1.7" fill="#ff2222"/>
<rect x="86.8" y="109.5" width="1.0" height="1.0" fill="#ff2222"/>
<rect x="82.7" y="100.3" width="1.3" height="1.3" fill="#ff2222"/>
<rect x="87.3" y="100.3" width="1.5" height="1.5" fill="#cc77ee"/>
<rect x="87.2" y="110.2" width="1.7" height="1.7" fill="#ff2222"/>
<rect x="85.7" y="117.5" width="1.2" height="1.2" fill="#3333ff"/>
<rect x="82.9" y="117.4" width="1.2" height="1.2" fill="#cc77ee"/>
<rect x="84.3" y="117.6" width="1.1" height="1.1" fill="#3333ff"/>
<rect x="87.5" y="106.6" width="1.8" height="1.8" fill="#3333ff"/>
<rect x="87.6" y="101.6" width="1.4" height="1.4" fill="#ff2222"/>
<rect x="83.3" y="103.9" width="1.4" height="1.4" fill="#3333ff"/>
<rect x="80.1" y="114.9" width="1.5" height="1.5" fill="#ff2222"/>
<rect x="85.9" y="99.0" width="1.0" height="1.0" fill="#3333ff"/>
<rect x="86.4" y="108.2" width="1.8" height="1.8" fill="#ff2222"/>
<rect x="83.9" y="101.1" width="1.6" height="1.6" fill="#cc77ee"/>
<rect x="81.4" y="107.9" width="1.3" height="1.3" fill="#cc77ee"/>
<rect x="85.0" y="102.4" width="1.5" height="1.5" fill="#3333ff"/>
<rect x="82.2" y="104.4" width="1.0" height="1.0" fill="#cc77ee"/>
<rect x="82.2" y="104.8" width="1.3" height="1.3" fill="#ff2222"/>
<rect x="88.0" y="108.2" width="1.4" height="1.4" fill="#3333ff"/>
<rect x="86.0" y="105.2" width="1.0" height="1.0" fill="#cc77ee"/>
<rect x="83.8" y="103.4" width="1.3" height="1.3" fill="#ff2222"/>
<rect x="84.1" y="100.0" width="1.2" height="1.2" fill="#ff2222"/>
<rect x="88.3" y="112.2" width="1.1" height="1.1" fill="#ff2222"/>
<rect x="87.8" y="110.2" width="1.2" height="1.2" fill="#cc77ee"/>
<rect x="86.9" y="103.0" width="0.9" height="0.9" fill="#ff2222"/>
<rect x="80.7" y="115.5" width="1.3" height="1.3" fill="#3333ff"/>
<rect x="86.5" y="116.7" width="1.1" height="1.1" fill="#ff2222"/>
<rect x="87.3" y="113.5" width="1.7" height="1.7" fill="#ff2222"/>
<rect x="82.1" y="103.9" width="1.5" height="1.5" fill="#3333ff"/>
<rect x="84.0" y="114.8" width="0.9" height="0.9" fill="#cc77ee"/>
<rect x="83.3" y="97.9" width="0.9" height="0.9" fill="#ff2222"/>
<rect x="84.9" y="108.1" width="1.1" height="1.1" fill="#ff2222"/>
<rect x="83.0" y="106.9" width="1.5" height="1.5" fill="#ff2222"/>
<rect x="83.8" y="109.4" width="1.3" height="1.3" fill="#3333ff"/>
<rect x="86.8" y="113.8" width="1.0" height="1.0" fill="#3333ff"/>
<rect x="85.7" y="110.2" width="1.0" height="1.0" fill="#ff2222"/>
<rect x="84.4" y="114.6" width="1.3" height="1.3" fill="#3333ff"/>
<rect x="87.0" y="110.0" width="1.0" height="1.0" fill="#ff2222"/>
<rect x="79.4" y="110.0" width="1.1" height="1.1" fill="#3333ff"/>
<rect x="87.1" y="99.9" width="1.1" height="1.1" fill="#ff2222"/>
<rect x="82.3" y="113.1" width="1.0" height="1.0" fill="#3333ff"/>
<rect x="81.5" y="110.7" width="1.1" height="1.1" fill="#3333ff"/>
<rect x="88.8" y="114.3" width="1.3" height="1.3" fill="#ff2222"/>
<rect x="81.5" y="102.7" width="1.4" height="1.4" fill="#cc77ee"/>
<rect x="86.1" y="109.9" width="1.0" height="1.0" fill="#3333ff"/>
<rect x="84.4" y="114.4" width="1.5" height="1.5" fill="#3333ff"/>
<rect x="86.2" y="115.8" width="1.6" height="1.6" fill="#3333ff"/>
<rect x="79.6" y="106.7" width="1.7" height="1.7" fill="#3333ff"/>
<rect x="81.2" y="117.3" width="1.6" height="1.6" fill="#3333ff"/>
<rect x="88.9" y="113.0" width="1.3" height="1.3" fill="#ff2222"/>
<rect x="84.5" y="114.2" width="1.2" height="1.2" fill="#ff2222"/>
<rect x="91.0" y="114.7" width="1.0" height="1.0" fill="#3333ff"/>
<rect x="92.0" y="119.2" width="1.2" height="1.2" fill="#cc77ee"/>
<rect x="94.2" y="103.7" width="0.9" height="0.9" fill="#cc77ee"/>
<rect x="92.9" y="123.1" width="1.0" height="1.0" fill="#3333ff"/>
<rect x="92.4" y="116.3" width="1.4" height="1.4" fill="#3333ff"/>
<rect x="93.6" y="103.9" width="0.9" height="0.9" fill="#3333ff"/>
<rect x="92.5" y="105.3" width="0.9" height="0.9" fill="#3333ff"/>
<rect x="94.7" y="115.1" width="0.8" height="0.8" fill="#cc77ee"/>
<rect x="92.3" y="122.2" width="0.9" height="0.9" fill="#3333ff"/>
<rect x="92.0" y="100.8" width="1.0" height="1.0" fill="#3333ff"/>
<rect x="91.6" y="106.5" width="1.3" height="1.3" fill="#3333ff"/>
<rect x="91.2" y="115.9" width="1.4" height="1.4" fill="#cc77ee"/>
<rect x="94.0" y="104.3" width="1.0" height="1.0" fill="#cc77ee"/>
<rect x="93.8" y="104.3" width="1.1" height="1.1" fill="#3333ff"/>
<rect x="93.7" y="106.6" width="1.0" height="1.0" fill="#cc77ee"/>
<rect x="93.1" y="112.1" width="1.3" height="1.3" fill="#cc77ee"/>
<rect x="93.4" y="100.0" width="1.3" height="1.3" fill="#cc77ee"/>
<rect x="93.9" y="105.0" width="1.0" height="1.0" fill="#cc77ee"/>
<rect x="91.0" y="116.6" width="1.1" height="1.1" fill="#cc77ee"/>
<rect x="91.9" y="117.5" width="1.0" height="1.0" fill="#cc77ee"/>
<rect x="93.6" y="109.9" width="1.4" height="1.4" fill="#cc77ee"/>
<rect x="93.2" y="114.9" width="0.9" height="0.9" fill="#cc77ee"/>
<rect x="92.6" y="109.5" width="0.8" height="0.8" fill="#3333ff"/>
<rect x="94.9" y="108.4" width="1.3" height="1.3" fill="#cc77ee"/>
<rect x="94.5" y="117.1" width="1.2" height="1.2" fill="#cc77ee"/>
<rect x="92.4" y="116.1" width="1.0" height="1.0" fill="#cc77ee"/>
<rect x="93.5" y="102.9" width="1.2" height="1.2" fill="#cc77ee"/>
<rect x="91.7" y="105.1" width="0.8" height="0.8" fill="#3333ff"/>
<rect x="91.5" y="112.9" width="1.5" height="1.5" fill="#cc77ee"/>
<rect x="92.7" y="113.0" width="1.1" height="1.1" fill="#3333ff"/>
<rect x="92.4" y="120.1" width="0.8" height="0.8" fill="#cc77ee"/>
<rect x="92.9" y="121.9" width="1.2" height="1.2" fill="#3333ff"/>
<rect x="91.8" y="113.6" width="1.1" height="1.1" fill="#cc77ee"/>
<rect x="92.9" y="114.2" width="1.1" height="1.1" fill="#cc77ee"/>
<rect x="94.7" y="108.0" width="0.9" height="0.9" fill="#cc77ee"/>
<rect x="91.5" y="112.9" width="0.8" height="0.8" fill="#cc77ee"/>
<rect x="94.5" y="112.6" width="1.1" height="1.1" fill="#cc77ee"/>
<rect x="91.2" y="106.3" width="1.3" height="1.3" fill="#3333ff"/>
<rect x="92.7" y="119.4" width="1.2" height="1.2" fill="#cc77ee"/>
<rect x="93.8" y="104.9" width="0.9" height="0.9" fill="#cc77ee"/>
<rect x="88.5" y="124.3" width="1.0" height="1.0" fill="#cc77ee"/>
<rect x="90.5" y="122.3" width="1.3" height="1.3" fill="#cc77ee"/>
<rect x="87.5" y="123.4" width="1.0" height="1.0" fill="#cc77ee"/>
<rect x="87.7" y="122.0" width="1.2" height="1.2" fill="#cc77ee"/>
<rect x="89.5" y="121.4" width="0.9" height="0.9" fill="#cc77ee"/>
<rect x="87.7" y="122.8" width="1.4" height="1.4" fill="#cc77ee"/>
<rect x="86.1" y="121.8" width="1.3" height="1.3" fill="#cc77ee"/>
<rect x="88.0" y="123.3" width="1.2" height="1.2" fill="#cc77ee"/>
<rect x="86.6" y="123.8" width="1.4" height="1.4" fill="#cc77ee"/>
<rect x="87.2" y="123.4" width="1.0" height="1.0" fill="#cc77ee"/>
<text x="58.2" y="61.4" font-family="Liberation Sans" font-weight="bold" font-size="5" fill="#6e6e6e" text-anchor="middle" letter-spacing="0.6">NEW SOUTH</text>
<text x="58.8" y="67" font-family="Liberation Sans" font-weight="bold" font-size="5" fill="#6e6e6e" text-anchor="middle" letter-spacing="0.6">WALES</text>
<text x="20" y="125.6" font-family="Liberation Sans" font-weight="bold" font-size="4.8" fill="#6e6e6e" letter-spacing="0.6">VICTORIA</text>
<circle cx="114.5" cy="79.8" r="1.1" fill="#fff" stroke="#333" stroke-width="0.5"/>
<text x="116.3" y="83" font-family="Liberation Sans" font-size="7.4" fill="#1a1a1a" stroke="#fff" stroke-width="1.2" paint-order="stroke" textLength="22.5">Sydney</text>
<circle cx="42" cy="134" r="1" fill="#fff" stroke="#333" stroke-width="0.5"/>
<text x="44" y="137" font-family="Liberation Sans" font-size="6.2" fill="#222" stroke="#fff" stroke-width="1" paint-order="stroke">Melbourne</text></svg><div id="legend">
<div class="abs" style="left:10px;top:3px;font-size:12px;font-weight:bold;color:#555;line-height:16px">Key:</div>
<div class="abs" style="left:45.5px;top:3px;width:17px;height:11px;background:#00ff00;border:1px solid #5fd35f"></div>
<div class="abs" style="left:65px;top:3px;font-size:12px;color:#555;line-height:16px">&lt;1%</div>
<div class="abs" style="left:99.5px;top:3px;width:17px;height:11px;background:#cc66ff;border:1px solid #c08ad8"></div>
<div class="abs" style="left:119px;top:3px;font-size:12px;color:#555;line-height:16px">1-10%</div>
<div class="abs" style="left:162px;top:3px;width:17px;height:11px;background:#0000ff;border:1px solid #6060d0"></div>
<div class="abs" style="left:182px;top:3px;font-size:12px;color:#555;line-height:16px">10-50%</div>
<div class="abs" style="left:233px;top:3px;width:17px;height:11px;background:#ff0000;border:1px solid #e06060"></div>
<div class="abs" style="left:233px;top:18px;font-size:12px;color:#555;line-height:16px">&gt;50%</div>
<div class="abs" style="left:0;top:38px;width:280px;text-align:center;font-size:12px;color:#555;line-height:17.6px">Estimated percentage landcover for vegetation<br>class</div>
</div></div>
<div class="h2" style="left:363px;top:538px">Trees</div>
<div class="h2" style="left:363px;top:770px">Shrubs</div>
<div class="p" style="left:362.5px;top:580.5px;width:530px"><div style="float:right;width:302px;height:140px"></div><i>Eucalyptus pauciflora</i> (white sally) is widespread. It is sometimes accompanied by <i>E. dalrympleana</i> (mountain gum), <i>E. rubida</i> subsp. <i>rubida</i> (candlebark) and <i>E. stellulata</i> (black sally). Above 1500 m elevation <i>E. debeuzevillei</i> (snow gum) and <i>E. niphophila</i> (snow gum) are common.</div>
<div class="p" style="left:362.5px;top:814px;width:530px"><i>Acacia dealbata</i> (silver wattle), <i>Bossiaea foliosa</i>, <i>Brachyloma daphnoides</i> (daphne heath), <i>Daviesia mimosoides</i> subsp. <i>mimosoides</i>, <i>D. ulicifolia</i> (gorse bitter pea), <i>Derwentia perfoliata</i> (diggers speedwell), <i>Hibbertia obtusifolia</i>, <i>Leucopogon hookeri</i>, <i>L. montanus</i>, <i>Monotoca scoparia</i> (prickly broom-heath), <i>Olearia erubescens</i> (silky daisy bush), <i>Podolobium alpestre</i> (alpine shaggy pea).</div>


<div class="abs" style="left:923px;top:298px;font-size:24px;line-height:28px;color:#444">Images</div>
<div id="imgbox"><svg class="abs" style="left:15px;top:0" width="150" height="100" viewBox="0 0 150 100">
<defs>
<linearGradient id="sky" x1="0" y1="0" x2="0.6" y2="1"><stop offset="0" stop-color="#0b58a8"/><stop offset="0.5" stop-color="#1d74c0"/><stop offset="0.8" stop-color="#7cb0de"/></linearGradient>
<linearGradient id="snow" x1="0" y1="0" x2="0" y2="1"><stop offset="0" stop-color="#dfe7f4"/><stop offset="1" stop-color="#f4f7fc"/></linearGradient>
<filter id="bl" x="-5%" y="-5%" width="110%" height="110%"><feGaussianBlur stdDeviation="0.5"/></filter>
</defs>
<rect width="150" height="100" fill="url(#sky)"/>
<g filter="url(#bl)">
<path d="M0,76 C30,74 60,76 90,73 C115,70 135,68 150,66 L150,100 L0,100Z" fill="url(#snow)"/>
<ellipse cx="21.2" cy="21.3" rx="2.7" ry="1.7" fill="#2c2f35"/>
<ellipse cx="25.7" cy="11.4" rx="3.3" ry="1.2" fill="#2a3340"/>
<ellipse cx="14.1" cy="12.7" rx="2.1" ry="1.8" fill="#23272d"/>
<ellipse cx="23.0" cy="20.9" rx="3.2" ry="2.0" fill="#3b3a3c"/>
<ellipse cx="28.6" cy="11.8" rx="3.2" ry="1.8" fill="#23272d"/>
<ellipse cx="26.0" cy="9.4" rx="2.8" ry="1.9" fill="#35363a"/>
<ellipse cx="28.5" cy="13.6" rx="1.6" ry="2.1" fill="#23272d"/>
<ellipse cx="1.9" cy="14.8" rx="2.1" ry="1.7" fill="#2c2f35"/>
<ellipse cx="8.1" cy="4.3" rx="3.0" ry="1.1" fill="#2c2f35"/>
<ellipse cx="18.3" cy="24.4" rx="3.2" ry="2.0" fill="#2a3340"/>
<ellipse cx="18.5" cy="11.8" rx="2.5" ry="1.8" fill="#3b3a3c"/>
<ellipse cx="18.9" cy="23.9" rx="3.2" ry="1.6" fill="#35363a"/>
<ellipse cx="25.5" cy="9.4" rx="2.0" ry="1.7" fill="#35363a"/>
<ellipse cx="19.1" cy="12.7" rx="2.8" ry="2.4" fill="#3b3a3c"/>
<ellipse cx="18.5" cy="12.1" rx="2.6" ry="1.7" fill="#2a3340"/>
<ellipse cx="4.2" cy="5.9" rx="2.6" ry="1.2" fill="#2c2f35"/>
<ellipse cx="3.1" cy="3.5" rx="2.1" ry="2.0" fill="#35363a"/>
<ellipse cx="14.2" cy="17.3" rx="3.2" ry="1.2" fill="#3b3a3c"/>
<ellipse cx="4.1" cy="19.6" rx="2.8" ry="2.2" fill="#2c2f35"/>
<ellipse cx="-0.1" cy="19.1" rx="3.3" ry="1.8" fill="#35363a"/>
<ellipse cx="3.6" cy="12.5" rx="1.9" ry="2.2" fill="#2c2f35"/>
<ellipse cx="3.6" cy="8.7" rx="2.2" ry="2.0" fill="#23272d"/>
<ellipse cx="16.0" cy="9.5" rx="1.9" ry="1.4" fill="#3b3a3c"/>
<ellipse cx="14.1" cy="20.2" rx="3.1" ry="1.9" fill="#2c2f35"/>
<ellipse cx="28.6" cy="10.8" rx="2.4" ry="1.3" fill="#2a3340"/>
<ellipse cx="24.0" cy="7.2" rx="3.3" ry="2.2" fill="#35363a"/>
<ellipse cx="18.5" cy="0.3" rx="2.6" ry="1.6" fill="#2a3340"/>
<ellipse cx="23.6" cy="6.8" rx="1.7" ry="1.8" fill="#2c2f35"/>
<ellipse cx="14.2" cy="10.7" rx="2.8" ry="2.3" fill="#23272d"/>
<ellipse cx="13.1" cy="19.4" rx="1.9" ry="2.3" fill="#3b3a3c"/>
<ellipse cx="13.5" cy="20.3" rx="3.3" ry="2.2" fill="#2c2f35"/>
<ellipse cx="20.7" cy="18.4" rx="1.8" ry="1.9" fill="#2c2f35"/>
<ellipse cx="19.3" cy="14.0" rx="2.0" ry="1.4" fill="#35363a"/>
<ellipse cx="1.3" cy="19.4" rx="2.6" ry="1.2" fill="#3b3a3c"/>
<ellipse cx="18.4" cy="22.7" rx="2.9" ry="1.8" fill="#2a3340"/>
<ellipse cx="24.5" cy="3.9" rx="3.0" ry="1.0" fill="#3b3a3c"/>
<ellipse cx="21.1" cy="5.8" rx="2.5" ry="2.2" fill="#2c2f35"/>
<ellipse cx="13.7" cy="22.8" rx="2.0" ry="1.0" fill="#3b3a3c"/>
<ellipse cx="22.1" cy="21.2" rx="3.4" ry="2.1" fill="#2a3340"/>
<ellipse cx="1.2" cy="12.6" rx="2.5" ry="1.1" fill="#2a3340"/>
<ellipse cx="12.4" cy="-0.7" rx="2.0" ry="2.0" fill="#2a3340"/>
<ellipse cx="14.4" cy="6.3" rx="2.6" ry="1.4" fill="#2c2f35"/>
<ellipse cx="8.1" cy="17.8" rx="3.4" ry="1.1" fill="#23272d"/>
<ellipse cx="6.2" cy="3.6" rx="3.0" ry="2.3" fill="#2a3340"/>
<ellipse cx="12.3" cy="10.7" rx="2.7" ry="1.6" fill="#2a3340"/>
<ellipse cx="-1.9" cy="11.0" rx="1.5" ry="1.0" fill="#3b3a3c"/>
<ellipse cx="22.6" cy="13.8" rx="2.6" ry="1.5" fill="#3b3a3c"/>
<ellipse cx="6.0" cy="13.7" rx="2.2" ry="1.7" fill="#23272d"/>
<ellipse cx="20.9" cy="13.3" rx="2.1" ry="1.8" fill="#2c2f35"/>
<ellipse cx="16.5" cy="1.9" rx="2.9" ry="1.9" fill="#2a3340"/>
<ellipse cx="9.6" cy="1.8" rx="1.9" ry="2.3" fill="#3b3a3c"/>
<ellipse cx="10.4" cy="19.5" rx="2.4" ry="2.0" fill="#23272d"/>
<ellipse cx="18.0" cy="17.0" rx="3.2" ry="2.0" fill="#23272d"/>
<ellipse cx="9.5" cy="10.8" rx="2.0" ry="2.3" fill="#3b3a3c"/>
<ellipse cx="30.8" cy="10.6" rx="1.7" ry="1.6" fill="#35363a"/>
<ellipse cx="5.0" cy="19.1" rx="1.8" ry="1.1" fill="#23272d"/>
<ellipse cx="10.2" cy="17.9" rx="3.1" ry="1.2" fill="#2a3340"/>
<ellipse cx="18.1" cy="21.6" rx="2.0" ry="1.5" fill="#3b3a3c"/>
<ellipse cx="3.0" cy="13.8" rx="2.6" ry="1.4" fill="#2c2f35"/>
<ellipse cx="7.4" cy="3.1" rx="1.6" ry="2.3" fill="#2c2f35"/>
<ellipse cx="28.9" cy="14.5" rx="3.3" ry="2.0" fill="#23272d"/>
<ellipse cx="25.5" cy="16.5" rx="2.2" ry="1.6" fill="#3b3a3c"/>
<ellipse cx="14.1" cy="13.1" rx="2.5" ry="1.1" fill="#35363a"/>
<ellipse cx="17.8" cy="19.4" rx="1.4" ry="1.2" fill="#2a3340"/>
<ellipse cx="18.0" cy="0.6" rx="2.5" ry="1.0" fill="#2c2f35"/>
<ellipse cx="0.1" cy="18.1" rx="1.9" ry="1.8" fill="#2a3340"/>
<ellipse cx="28.2" cy="6.5" rx="1.4" ry="1.8" fill="#23272d"/>
<ellipse cx="-0.3" cy="16.7" rx="3.4" ry="1.9" fill="#2c2f35"/>
<ellipse cx="28.3" cy="16.3" rx="2.6" ry="1.8" fill="#3b3a3c"/>
<ellipse cx="8.0" cy="2.4" rx="1.7" ry="1.2" fill="#35363a"/>
<ellipse cx="10.0" cy="21.8" rx="3.2" ry="1.1" fill="#23272d"/>
<ellipse cx="16.1" cy="15.8" rx="3.1" ry="1.5" fill="#35363a"/>
<ellipse cx="17.1" cy="12.9" rx="2.4" ry="1.9" fill="#3b3a3c"/>
<ellipse cx="17.0" cy="15.5" rx="3.3" ry="1.7" fill="#3b3a3c"/>
<ellipse cx="16.4" cy="17.4" rx="3.3" ry="1.6" fill="#35363a"/>
<ellipse cx="17.7" cy="6.7" rx="1.5" ry="1.5" fill="#2a3340"/>
<ellipse cx="4.9" cy="4.3" rx="1.4" ry="1.5" fill="#3b3a3c"/>
<ellipse cx="22.2" cy="22.2" rx="3.0" ry="2.2" fill="#23272d"/>
<ellipse cx="17.1" cy="23.2" rx="3.2" ry="1.7" fill="#23272d"/>
<ellipse cx="24.4" cy="10.5" rx="3.3" ry="2.3" fill="#35363a"/>
<ellipse cx="24.1" cy="12.5" rx="2.6" ry="1.8" fill="#3b3a3c"/>
<ellipse cx="9.9" cy="7.8" rx="3.3" ry="1.7" fill="#3b3a3c"/>
<ellipse cx="18.6" cy="24.5" rx="2.5" ry="2.1" fill="#35363a"/>
<ellipse cx="21.0" cy="8.6" rx="2.6" ry="1.5" fill="#35363a"/>
<ellipse cx="-1.2" cy="6.3" rx="3.2" ry="2.3" fill="#23272d"/>
<ellipse cx="28.6" cy="10.9" rx="2.9" ry="1.3" fill="#2a3340"/>
<ellipse cx="-1.9" cy="10.2" rx="2.4" ry="1.2" fill="#2c2f35"/>
<ellipse cx="7.0" cy="3.3" rx="2.3" ry="1.7" fill="#2c2f35"/>
<ellipse cx="9.0" cy="6.7" rx="2.3" ry="1.5" fill="#3b3a3c"/>
<ellipse cx="10.6" cy="12.4" rx="3.1" ry="1.3" fill="#35363a"/>
<ellipse cx="1.0" cy="6.0" rx="2.9" ry="2.0" fill="#2c2f35"/>
<ellipse cx="6.4" cy="17.7" rx="1.4" ry="1.9" fill="#2a3340"/>
<ellipse cx="9.5" cy="23.4" rx="2.3" ry="1.7" fill="#2a3340"/>
<ellipse cx="18.5" cy="3.7" rx="1.5" ry="1.5" fill="#2c2f35"/>
<ellipse cx="2.5" cy="12.0" rx="2.2" ry="1.9" fill="#2a3340"/>
<ellipse cx="13.1" cy="8.6" rx="1.9" ry="1.1" fill="#35363a"/>
<ellipse cx="12.9" cy="3.2" rx="1.6" ry="2.2" fill="#2a3340"/>
<ellipse cx="23.2" cy="2.0" rx="1.6" ry="1.4" fill="#2c2f35"/>
<ellipse cx="23.4" cy="21.4" rx="1.9" ry="1.9" fill="#35363a"/>
<ellipse cx="6.6" cy="4.6" rx="1.7" ry="2.1" fill="#3b3a3c"/>
<ellipse cx="16.8" cy="22.6" rx="2.1" ry="1.9" fill="#35363a"/>
<ellipse cx="29.6" cy="12.7" rx="2.0" ry="1.3" fill="#3b3a3c"/>
<ellipse cx="27.7" cy="16.2" rx="2.6" ry="1.7" fill="#2c2f35"/>
<ellipse cx="4.6" cy="7.1" rx="2.4" ry="2.3" fill="#35363a"/>
<ellipse cx="11.7" cy="12.8" rx="3.3" ry="1.2" fill="#3b3a3c"/>
<ellipse cx="14.4" cy="1.6" rx="2.3" ry="1.7" fill="#2c2f35"/>
<ellipse cx="6.4" cy="14.3" rx="3.1" ry="2.2" fill="#2c2f35"/>
<ellipse cx="16.5" cy="-0.2" rx="2.9" ry="1.5" fill="#2c2f35"/>
<ellipse cx="21.7" cy="22.0" rx="2.1" ry="1.4" fill="#2c2f35"/>
<ellipse cx="25.2" cy="10.1" rx="1.8" ry="1.0" fill="#2c2f35"/>
<ellipse cx="70.5" cy="8.9" rx="1.6" ry="1.7" fill="#23272d"/>
<ellipse cx="63.9" cy="10.0" rx="1.6" ry="2.0" fill="#2c2f35"/>
<ellipse cx="63.3" cy="11.4" rx="1.9" ry="1.8" fill="#23272d"/>
<ellipse cx="67.3" cy="17.3" rx="3.0" ry="2.3" fill="#23272d"/>
<ellipse cx="56.7" cy="16.6" rx="3.0" ry="1.9" fill="#3b3a3c"/>
<ellipse cx="76.0" cy="13.2" rx="3.2" ry="2.1" fill="#2a3340"/>
<ellipse cx="64.5" cy="12.2" rx="2.7" ry="2.1" fill="#35363a"/>
<ellipse cx="68.8" cy="5.3" rx="2.5" ry="1.2" fill="#35363a"/>
<ellipse cx="60.7" cy="16.1" rx="1.9" ry="2.3" fill="#35363a"/>
<ellipse cx="73.6" cy="13.4" rx="1.6" ry="1.4" fill="#2c2f35"/>
<ellipse cx="67.1" cy="8.9" rx="2.0" ry="1.1" fill="#3b3a3c"/>
<ellipse cx="69.4" cy="11.0" rx="2.9" ry="2.1" fill="#2a3340"/>
<ellipse cx="63.3" cy="6.1" rx="2.3" ry="1.8" fill="#35363a"/>
<ellipse cx="66.6" cy="10.3" rx="2.7" ry="1.8" fill="#3b3a3c"/>
<ellipse cx="71.8" cy="19.0" rx="2.3" ry="1.3" fill="#23272d"/>
<ellipse cx="68.1" cy="15.2" rx="3.3" ry="1.0" fill="#2c2f35"/>
<ellipse cx="74.5" cy="5.7" rx="1.9" ry="1.5" fill="#3b3a3c"/>
<ellipse cx="71.0" cy="18.2" rx="3.2" ry="1.2" fill="#35363a"/>
<ellipse cx="59.6" cy="12.6" rx="3.2" ry="2.2" fill="#2c2f35"/>
<ellipse cx="64.4" cy="18.7" rx="2.8" ry="2.0" fill="#23272d"/>
<ellipse cx="71.7" cy="9.3" rx="3.4" ry="1.4" fill="#3b3a3c"/>
<ellipse cx="72.0" cy="5.6" rx="2.8" ry="1.0" fill="#2a3340"/>
<ellipse cx="66.0" cy="16.1" rx="3.0" ry="1.8" fill="#2c2f35"/>
<ellipse cx="70.0" cy="4.8" rx="3.2" ry="2.1" fill="#2c2f35"/>
<ellipse cx="56.1" cy="12.0" rx="2.4" ry="2.3" fill="#3b3a3c"/>
<ellipse cx="57.8" cy="17.3" rx="2.9" ry="1.7" fill="#23272d"/>
<ellipse cx="67.5" cy="12.4" rx="1.6" ry="1.6" fill="#3b3a3c"/>
<ellipse cx="76.9" cy="13.9" rx="1.6" ry="1.7" fill="#35363a"/>
<ellipse cx="60.0" cy="5.9" rx="2.0" ry="2.1" fill="#2a3340"/>
<ellipse cx="72.7" cy="15.1" rx="2.8" ry="2.1" fill="#35363a"/>
<ellipse cx="54.9" cy="13.7" rx="3.2" ry="1.4" fill="#35363a"/>
<ellipse cx="72.0" cy="15.5" rx="3.3" ry="1.5" fill="#2c2f35"/>
<ellipse cx="69.9" cy="8.2" rx="3.0" ry="1.0" fill="#35363a"/>
<ellipse cx="78.1" cy="13.9" rx="2.8" ry="1.7" fill="#23272d"/>
<ellipse cx="68.8" cy="8.9" rx="2.5" ry="1.8" fill="#2c2f35"/>
<ellipse cx="72.9" cy="6.8" rx="1.7" ry="2.0" fill="#23272d"/>
<ellipse cx="72.1" cy="18.1" rx="2.2" ry="1.4" fill="#3b3a3c"/>
<ellipse cx="58.4" cy="16.7" rx="2.0" ry="2.3" fill="#23272d"/>
<ellipse cx="67.3" cy="16.5" rx="2.0" ry="1.6" fill="#2c2f35"/>
<ellipse cx="70.8" cy="11.9" rx="3.3" ry="2.3" fill="#3b3a3c"/>
<ellipse cx="64.0" cy="4.5" rx="1.8" ry="2.0" fill="#3b3a3c"/>
<ellipse cx="79.1" cy="11.1" rx="3.2" ry="1.1" fill="#2a3340"/>
<ellipse cx="54.6" cy="12.6" rx="1.7" ry="1.7" fill="#23272d"/>
<ellipse cx="66.1" cy="11.5" rx="2.9" ry="2.4" fill="#2a3340"/>
<ellipse cx="73.5" cy="17.0" rx="2.7" ry="1.1" fill="#3b3a3c"/>
<ellipse cx="74.0" cy="14.7" rx="3.4" ry="2.2" fill="#3b3a3c"/>
<ellipse cx="60.3" cy="12.3" rx="2.5" ry="1.9" fill="#2c2f35"/>
<ellipse cx="63.0" cy="19.3" rx="1.7" ry="2.3" fill="#35363a"/>
<ellipse cx="56.4" cy="9.5" rx="2.2" ry="2.0" fill="#35363a"/>
<ellipse cx="64.1" cy="11.6" rx="1.6" ry="1.3" fill="#2c2f35"/>
<ellipse cx="58.3" cy="13.4" rx="2.4" ry="1.3" fill="#2a3340"/>
<ellipse cx="55.7" cy="13.2" rx="2.8" ry="1.4" fill="#2a3340"/>
<ellipse cx="59.4" cy="9.0" rx="2.2" ry="1.3" fill="#35363a"/>
<ellipse cx="68.6" cy="15.2" rx="2.5" ry="2.3" fill="#2c2f35"/>
<ellipse cx="76.2" cy="15.8" rx="1.9" ry="2.0" fill="#3b3a3c"/>
<ellipse cx="61.5" cy="9.6" rx="2.4" ry="1.1" fill="#2a3340"/>
<ellipse cx="60.6" cy="7.0" rx="1.6" ry="1.4" fill="#23272d"/>
<ellipse cx="69.8" cy="17.6" rx="2.8" ry="1.7" fill="#2a3340"/>
<ellipse cx="55.4" cy="11.7" rx="2.7" ry="1.9" fill="#3b3a3c"/>
<ellipse cx="79.0" cy="11.8" rx="2.2" ry="1.8" fill="#2c2f35"/>
<ellipse cx="98.9" cy="17.4" rx="2.0" ry="1.5" fill="#2c2f35"/>
<ellipse cx="106.3" cy="12.9" rx="1.9" ry="2.0" fill="#3b3a3c"/>
<ellipse cx="92.4" cy="17.3" rx="3.2" ry="1.1" fill="#35363a"/>
<ellipse cx="99.9" cy="24.8" rx="2.5" ry="1.7" fill="#35363a"/>
<ellipse cx="95.8" cy="9.9" rx="1.9" ry="1.2" fill="#35363a"/>
<ellipse cx="94.7" cy="10.7" rx="1.7" ry="1.8" fill="#35363a"/>
<ellipse cx="93.0" cy="13.2" rx="2.7" ry="1.1" fill="#23272d"/>
<ellipse cx="104.0" cy="12.5" rx="3.1" ry="1.8" fill="#2c2f35"/>
<ellipse cx="105.9" cy="15.8" rx="2.0" ry="2.1" fill="#2c2f35"/>
<ellipse cx="105.9" cy="23.1" rx="2.2" ry="1.9" fill="#2c2f35"/>
<ellipse cx="91.9" cy="21.5" rx="2.1" ry="1.9" fill="#2c2f35"/>
<ellipse cx="94.4" cy="11.3" rx="1.6" ry="2.4" fill="#23272d"/>
<ellipse cx="104.6" cy="20.3" rx="2.7" ry="1.7" fill="#3b3a3c"/>
<ellipse cx="98.7" cy="24.1" rx="3.2" ry="1.1" fill="#2a3340"/>
<ellipse cx="96.6" cy="15.6" rx="2.4" ry="1.1" fill="#23272d"/>
<ellipse cx="93.8" cy="18.4" rx="2.3" ry="1.7" fill="#35363a"/>
<ellipse cx="106.7" cy="12.2" rx="2.2" ry="1.9" fill="#23272d"/>
<ellipse cx="101.2" cy="10.2" rx="2.5" ry="1.3" fill="#35363a"/>
<ellipse cx="98.8" cy="24.1" rx="2.3" ry="2.1" fill="#3b3a3c"/>
<ellipse cx="95.7" cy="20.2" rx="3.3" ry="2.2" fill="#2c2f35"/>
<ellipse cx="96.5" cy="23.8" rx="2.0" ry="2.1" fill="#3b3a3c"/>
<ellipse cx="107.8" cy="18.0" rx="3.4" ry="1.1" fill="#23272d"/>
<ellipse cx="108.1" cy="12.7" rx="2.3" ry="2.1" fill="#3b3a3c"/>
<ellipse cx="97.7" cy="20.3" rx="1.9" ry="2.1" fill="#2c2f35"/>
<ellipse cx="103.8" cy="23.2" rx="1.6" ry="1.5" fill="#3b3a3c"/>
<ellipse cx="90.3" cy="15.5" rx="2.4" ry="1.7" fill="#2a3340"/>
<ellipse cx="100.1" cy="14.0" rx="3.0" ry="1.5" fill="#3b3a3c"/>
<ellipse cx="103.2" cy="23.7" rx="1.9" ry="2.1" fill="#23272d"/>
<ellipse cx="104.2" cy="23.0" rx="1.5" ry="1.8" fill="#2a3340"/>
<ellipse cx="98.5" cy="13.6" rx="1.6" ry="1.5" fill="#23272d"/>
<ellipse cx="104.4" cy="10.2" rx="3.2" ry="2.0" fill="#23272d"/>
<ellipse cx="96.5" cy="10.3" rx="1.9" ry="1.7" fill="#3b3a3c"/>
<ellipse cx="97.8" cy="17.9" rx="3.4" ry="2.0" fill="#35363a"/>
<ellipse cx="107.3" cy="17.9" rx="1.7" ry="2.3" fill="#2a3340"/>
<ellipse cx="105.9" cy="15.5" rx="3.3" ry="1.6" fill="#23272d"/>
<ellipse cx="95.5" cy="15.0" rx="2.7" ry="1.1" fill="#35363a"/>
<ellipse cx="97.0" cy="23.4" rx="1.7" ry="1.8" fill="#2c2f35"/>
<ellipse cx="91.7" cy="13.9" rx="2.4" ry="1.2" fill="#2a3340"/>
<ellipse cx="91.2" cy="16.0" rx="3.4" ry="1.3" fill="#23272d"/>
<ellipse cx="101.6" cy="12.5" rx="2.3" ry="2.1" fill="#35363a"/>
<ellipse cx="108.9" cy="20.4" rx="2.9" ry="1.5" fill="#2a3340"/>
<ellipse cx="97.6" cy="13.8" rx="1.7" ry="1.6" fill="#3b3a3c"/>
<ellipse cx="103.8" cy="16.0" rx="2.5" ry="1.7" fill="#35363a"/>
<ellipse cx="102.5" cy="16.2" rx="1.8" ry="2.1" fill="#2c2f35"/>
<ellipse cx="95.0" cy="11.9" rx="1.8" ry="2.3" fill="#2c2f35"/>
<ellipse cx="101.8" cy="21.6" rx="2.4" ry="1.1" fill="#2c2f35"/>
<ellipse cx="104.0" cy="20.4" rx="2.2" ry="2.3" fill="#35363a"/>
<ellipse cx="96.1" cy="20.8" rx="3.1" ry="1.8" fill="#35363a"/>
<ellipse cx="101.3" cy="16.0" rx="3.0" ry="1.3" fill="#35363a"/>
<ellipse cx="95.0" cy="12.4" rx="2.2" ry="1.9" fill="#35363a"/>
<ellipse cx="123.3" cy="33.0" rx="2.9" ry="1.0" fill="#23272d"/>
<ellipse cx="132.1" cy="25.0" rx="2.7" ry="1.6" fill="#2a3340"/>
<ellipse cx="139.4" cy="34.5" rx="2.3" ry="1.9" fill="#2c2f35"/>
<ellipse cx="139.5" cy="34.0" rx="2.4" ry="1.0" fill="#3b3a3c"/>
<ellipse cx="139.3" cy="32.1" rx="2.4" ry="1.4" fill="#3b3a3c"/>
<ellipse cx="138.4" cy="26.3" rx="1.4" ry="1.3" fill="#3b3a3c"/>
<ellipse cx="133.2" cy="24.9" rx="2.1" ry="1.6" fill="#35363a"/>
<ellipse cx="114.2" cy="30.8" rx="3.1" ry="1.5" fill="#3b3a3c"/>
<ellipse cx="132.4" cy="34.4" rx="1.8" ry="1.8" fill="#2c2f35"/>
<ellipse cx="127.9" cy="22.5" rx="2.6" ry="1.5" fill="#23272d"/>
<ellipse cx="126.0" cy="30.5" rx="2.3" ry="1.8" fill="#35363a"/>
<ellipse cx="113.9" cy="25.5" rx="2.3" ry="2.4" fill="#23272d"/>
<ellipse cx="133.0" cy="32.2" rx="2.6" ry="1.3" fill="#23272d"/>
<ellipse cx="132.6" cy="23.3" rx="2.8" ry="2.1" fill="#2a3340"/>
<ellipse cx="125.4" cy="25.5" rx="2.9" ry="1.5" fill="#3b3a3c"/>
<ellipse cx="141.2" cy="32.6" rx="1.7" ry="2.0" fill="#23272d"/>
<ellipse cx="138.1" cy="28.8" rx="2.7" ry="1.6" fill="#2a3340"/>
<ellipse cx="127.2" cy="25.1" rx="1.8" ry="1.6" fill="#2a3340"/>
<ellipse cx="144.1" cy="31.6" rx="2.4" ry="1.8" fill="#2c2f35"/>
<ellipse cx="118.9" cy="28.6" rx="2.6" ry="1.2" fill="#23272d"/>
<ellipse cx="142.8" cy="27.7" rx="2.7" ry="1.5" fill="#2c2f35"/>
<ellipse cx="125.0" cy="33.9" rx="2.7" ry="2.4" fill="#2a3340"/>
<ellipse cx="135.9" cy="29.9" rx="2.1" ry="1.5" fill="#2a3340"/>
<ellipse cx="129.2" cy="34.0" rx="2.3" ry="1.4" fill="#23272d"/>
<ellipse cx="114.6" cy="31.2" rx="1.7" ry="2.2" fill="#3b3a3c"/>
<ellipse cx="135.2" cy="24.5" rx="2.8" ry="1.7" fill="#3b3a3c"/>
<ellipse cx="127.1" cy="22.3" rx="1.6" ry="2.2" fill="#35363a"/>
<ellipse cx="131.3" cy="32.1" rx="2.2" ry="1.1" fill="#35363a"/>
<ellipse cx="146.9" cy="28.4" rx="2.1" ry="2.3" fill="#23272d"/>
<ellipse cx="139.6" cy="22.9" rx="2.7" ry="2.1" fill="#35363a"/>
<ellipse cx="137.6" cy="31.5" rx="1.7" ry="1.1" fill="#2c2f35"/>
<ellipse cx="129.3" cy="25.1" rx="3.2" ry="1.8" fill="#3b3a3c"/>
<ellipse cx="121.4" cy="27.8" rx="2.5" ry="1.2" fill="#23272d"/>
<ellipse cx="140.1" cy="27.3" rx="2.3" ry="1.4" fill="#35363a"/>
<ellipse cx="120.1" cy="22.0" rx="3.0" ry="1.3" fill="#2c2f35"/>
<ellipse cx="120.4" cy="24.8" rx="2.0" ry="1.7" fill="#23272d"/>
<ellipse cx="134.0" cy="25.2" rx="3.2" ry="1.2" fill="#2a3340"/>
<ellipse cx="118.2" cy="31.3" rx="2.0" ry="1.8" fill="#2c2f35"/>
<ellipse cx="121.9" cy="31.2" rx="2.3" ry="1.2" fill="#2c2f35"/>
<ellipse cx="143.0" cy="31.7" rx="2.3" ry="2.0" fill="#23272d"/>
<ellipse cx="144.6" cy="24.3" rx="3.0" ry="1.4" fill="#23272d"/>
<ellipse cx="129.1" cy="31.5" rx="2.7" ry="1.1" fill="#2c2f35"/>
<ellipse cx="147.0" cy="28.2" rx="2.1" ry="1.0" fill="#3b3a3c"/>
<ellipse cx="130.6" cy="22.1" rx="2.1" ry="1.7" fill="#2a3340"/>
<ellipse cx="135.4" cy="26.8" rx="1.8" ry="2.1" fill="#2a3340"/>
<ellipse cx="130.3" cy="27.5" rx="2.8" ry="1.9" fill="#3b3a3c"/>
<ellipse cx="144.6" cy="24.1" rx="1.7" ry="1.0" fill="#2c2f35"/>
<ellipse cx="114.2" cy="27.3" rx="3.0" ry="1.3" fill="#2c2f35"/>
<ellipse cx="127.4" cy="35.6" rx="1.7" ry="1.3" fill="#2c2f35"/>
<ellipse cx="140.1" cy="26.9" rx="2.9" ry="1.8" fill="#2a3340"/>
<ellipse cx="127.1" cy="28.1" rx="2.5" ry="2.2" fill="#3b3a3c"/>
<ellipse cx="125.5" cy="27.0" rx="1.6" ry="1.2" fill="#3b3a3c"/>
<ellipse cx="131.6" cy="33.6" rx="3.3" ry="1.8" fill="#3b3a3c"/>
<ellipse cx="134.4" cy="32.4" rx="2.6" ry="1.5" fill="#23272d"/>
<ellipse cx="114.0" cy="26.6" rx="1.4" ry="2.1" fill="#2c2f35"/>
<ellipse cx="127.8" cy="32.0" rx="2.1" ry="1.7" fill="#2c2f35"/>
<ellipse cx="125.4" cy="21.2" rx="2.5" ry="1.4" fill="#3b3a3c"/>
<ellipse cx="129.9" cy="27.8" rx="1.5" ry="2.0" fill="#3b3a3c"/>
<ellipse cx="124.7" cy="28.5" rx="2.5" ry="1.1" fill="#35363a"/>
<ellipse cx="122.7" cy="34.8" rx="2.3" ry="2.0" fill="#3b3a3c"/>
<ellipse cx="130.8" cy="30.0" rx="1.5" ry="1.2" fill="#23272d"/>
<ellipse cx="144.1" cy="29.4" rx="2.3" ry="1.8" fill="#35363a"/>
<ellipse cx="139.3" cy="25.5" rx="2.2" ry="2.1" fill="#2c2f35"/>
<ellipse cx="139.8" cy="34.3" rx="1.6" ry="1.3" fill="#2a3340"/>
<ellipse cx="137.3" cy="22.7" rx="2.4" ry="1.3" fill="#23272d"/>
<ellipse cx="134.5" cy="28.4" rx="1.8" ry="1.5" fill="#23272d"/>
<ellipse cx="137.8" cy="26.6" rx="2.4" ry="1.6" fill="#2c2f35"/>
<ellipse cx="132.5" cy="29.7" rx="2.3" ry="2.4" fill="#23272d"/>
<ellipse cx="113.7" cy="25.9" rx="1.6" ry="2.3" fill="#3b3a3c"/>
<ellipse cx="141.1" cy="31.3" rx="1.5" ry="1.6" fill="#35363a"/>
<ellipse cx="88.5" cy="32.8" rx="1.6" ry="1.8" fill="#2c2f35"/>
<ellipse cx="111.6" cy="39.4" rx="3.1" ry="1.4" fill="#3e4a5a"/>
<ellipse cx="72.9" cy="44.8" rx="3.2" ry="1.0" fill="#4a5668"/>
<ellipse cx="67.3" cy="50.1" rx="2.8" ry="1.6" fill="#2a3340"/>
<ellipse cx="94.3" cy="59.6" rx="3.1" ry="2.3" fill="#2a3340"/>
<ellipse cx="69.7" cy="56.4" rx="3.0" ry="2.1" fill="#35363a"/>
<ellipse cx="73.1" cy="40.7" rx="3.0" ry="1.8" fill="#4a5668"/>
<ellipse cx="117.4" cy="49.7" rx="1.7" ry="1.8" fill="#2a3340"/>
<ellipse cx="103.9" cy="50.4" rx="1.7" ry="1.4" fill="#4a5668"/>
<ellipse cx="78.8" cy="44.8" rx="2.5" ry="1.5" fill="#2c2f35"/>
<ellipse cx="73.2" cy="38.1" rx="2.1" ry="2.1" fill="#2a3340"/>
<ellipse cx="97.3" cy="46.6" rx="3.0" ry="1.0" fill="#3b3a3c"/>
<ellipse cx="100.3" cy="59.6" rx="2.3" ry="1.8" fill="#4a5668"/>
<ellipse cx="61.4" cy="39.8" rx="1.8" ry="1.1" fill="#23272d"/>
<ellipse cx="87.3" cy="54.3" rx="3.1" ry="2.2" fill="#4a5668"/>
<ellipse cx="93.6" cy="60.3" rx="3.0" ry="1.3" fill="#4a5668"/>
<ellipse cx="101.1" cy="47.9" rx="1.4" ry="1.6" fill="#35363a"/>
<ellipse cx="102.5" cy="49.2" rx="1.9" ry="2.0" fill="#35363a"/>
<ellipse cx="107.4" cy="50.7" rx="3.4" ry="2.3" fill="#2a3340"/>
<ellipse cx="106.8" cy="49.7" rx="3.3" ry="1.1" fill="#2c2f35"/>
<ellipse cx="80.3" cy="46.7" rx="2.7" ry="2.3" fill="#2c2f35"/>
<ellipse cx="78.4" cy="44.5" rx="1.5" ry="1.1" fill="#2c2f35"/>
<ellipse cx="105.6" cy="52.2" rx="3.0" ry="1.3" fill="#3b3a3c"/>
<ellipse cx="69.0" cy="37.6" rx="2.9" ry="1.4" fill="#4a5668"/>
<ellipse cx="116.9" cy="45.6" rx="3.3" ry="1.0" fill="#23272d"/>
<ellipse cx="115.6" cy="51.5" rx="1.5" ry="1.6" fill="#3b3a3c"/>
<ellipse cx="59.5" cy="41.7" rx="2.3" ry="2.1" fill="#2c2f35"/>
<ellipse cx="101.6" cy="46.5" rx="2.5" ry="2.1" fill="#4a5668"/>
<ellipse cx="100.1" cy="39.1" rx="3.2" ry="1.4" fill="#4a5668"/>
<ellipse cx="79.8" cy="41.7" rx="2.6" ry="1.6" fill="#2a3340"/>
<ellipse cx="60.8" cy="53.6" rx="3.3" ry="2.1" fill="#2c2f35"/>
<ellipse cx="83.9" cy="58.6" rx="2.1" ry="2.0" fill="#3e4a5a"/>
<ellipse cx="58.8" cy="41.0" rx="1.9" ry="2.1" fill="#23272d"/>
<ellipse cx="96.5" cy="44.5" rx="1.7" ry="2.3" fill="#4a5668"/>
<ellipse cx="94.4" cy="51.6" rx="2.8" ry="1.1" fill="#23272d"/>
<ellipse cx="109.9" cy="39.8" rx="3.0" ry="1.1" fill="#2a3340"/>
<ellipse cx="105.4" cy="57.6" rx="3.0" ry="1.5" fill="#2a3340"/>
<ellipse cx="74.0" cy="55.9" rx="3.3" ry="1.6" fill="#4a5668"/>
<ellipse cx="58.6" cy="44.7" rx="1.4" ry="1.4" fill="#23272d"/>
<ellipse cx="86.2" cy="33.0" rx="3.2" ry="2.1" fill="#23272d"/>
<ellipse cx="101.6" cy="45.8" rx="2.2" ry="2.1" fill="#3b3a3c"/>
<ellipse cx="105.1" cy="41.9" rx="1.9" ry="1.5" fill="#35363a"/>
<ellipse cx="79.4" cy="49.7" rx="2.2" ry="2.2" fill="#35363a"/>
<ellipse cx="79.9" cy="43.3" rx="2.1" ry="2.3" fill="#4a5668"/>
<ellipse cx="113.0" cy="38.7" rx="2.2" ry="1.6" fill="#2c2f35"/>
<ellipse cx="92.9" cy="58.5" rx="2.6" ry="1.1" fill="#2c2f35"/>
<ellipse cx="107.7" cy="50.1" rx="2.4" ry="2.4" fill="#3e4a5a"/>
<ellipse cx="94.4" cy="32.2" rx="1.9" ry="2.0" fill="#3e4a5a"/>
<ellipse cx="109.6" cy="51.1" rx="2.7" ry="1.0" fill="#2c2f35"/>
<ellipse cx="102.4" cy="38.5" rx="1.7" ry="1.3" fill="#4a5668"/>
<ellipse cx="65.0" cy="55.0" rx="2.2" ry="2.2" fill="#4a5668"/>
<ellipse cx="91.7" cy="57.8" rx="2.9" ry="1.9" fill="#3b3a3c"/>
<ellipse cx="85.9" cy="57.5" rx="1.8" ry="2.0" fill="#3e4a5a"/>
<ellipse cx="88.5" cy="40.2" rx="2.3" ry="2.3" fill="#23272d"/>
<ellipse cx="60.4" cy="39.3" rx="2.4" ry="1.4" fill="#3b3a3c"/>
<ellipse cx="89.4" cy="36.4" rx="1.5" ry="2.2" fill="#23272d"/>
<ellipse cx="73.9" cy="44.5" rx="3.1" ry="2.0" fill="#2c2f35"/>
<ellipse cx="56.8" cy="47.7" rx="3.4" ry="1.4" fill="#4a5668"/>
<ellipse cx="69.8" cy="44.6" rx="2.3" ry="1.7" fill="#3e4a5a"/>
<ellipse cx="60.3" cy="39.3" rx="2.5" ry="1.0" fill="#3e4a5a"/>
<ellipse cx="89.0" cy="33.0" rx="2.6" ry="1.4" fill="#35363a"/>
<ellipse cx="95.2" cy="36.2" rx="1.5" ry="1.2" fill="#23272d"/>
<ellipse cx="111.4" cy="52.5" rx="2.8" ry="2.2" fill="#4a5668"/>
<ellipse cx="65.0" cy="49.2" rx="1.5" ry="1.2" fill="#3b3a3c"/>
<ellipse cx="85.4" cy="58.6" rx="2.7" ry="1.7" fill="#2c2f35"/>
<ellipse cx="92.1" cy="49.9" rx="2.3" ry="2.2" fill="#3b3a3c"/>
<ellipse cx="88.6" cy="32.7" rx="3.2" ry="1.5" fill="#2a3340"/>
<ellipse cx="81.1" cy="46.0" rx="1.7" ry="1.4" fill="#35363a"/>
<ellipse cx="94.7" cy="54.5" rx="3.2" ry="1.5" fill="#4a5668"/>
<ellipse cx="85.7" cy="31.1" rx="2.8" ry="1.2" fill="#3e4a5a"/>
<ellipse cx="84.4" cy="50.1" rx="3.3" ry="1.7" fill="#2a3340"/>
<ellipse cx="61.3" cy="47.7" rx="1.7" ry="2.2" fill="#2a3340"/>
<ellipse cx="95.4" cy="38.4" rx="1.6" ry="2.4" fill="#35363a"/>
<ellipse cx="77.7" cy="57.7" rx="3.4" ry="2.3" fill="#35363a"/>
<ellipse cx="67.6" cy="52.4" rx="1.9" ry="1.4" fill="#3e4a5a"/>
<ellipse cx="82.8" cy="56.1" rx="3.1" ry="1.8" fill="#2c2f35"/>
<ellipse cx="92.0" cy="52.2" rx="1.5" ry="2.0" fill="#35363a"/>
<ellipse cx="66.0" cy="36.5" rx="1.5" ry="2.1" fill="#3b3a3c"/>
<ellipse cx="117.8" cy="42.1" rx="2.5" ry="1.3" fill="#4a5668"/>
<ellipse cx="78.0" cy="45.8" rx="2.4" ry="1.2" fill="#35363a"/>
<ellipse cx="74.2" cy="38.9" rx="1.7" ry="1.2" fill="#2a3340"/>
<ellipse cx="99.0" cy="50.8" rx="1.8" ry="1.6" fill="#3b3a3c"/>
<ellipse cx="108.7" cy="35.4" rx="2.4" ry="1.5" fill="#2a3340"/>
<ellipse cx="64.1" cy="40.0" rx="2.9" ry="2.2" fill="#35363a"/>
<ellipse cx="107.9" cy="47.3" rx="2.0" ry="1.1" fill="#23272d"/>
<ellipse cx="82.8" cy="51.1" rx="3.2" ry="1.6" fill="#3b3a3c"/>
<ellipse cx="91.9" cy="57.8" rx="1.9" ry="1.3" fill="#35363a"/>
<ellipse cx="101.0" cy="54.3" rx="2.2" ry="2.1" fill="#3b3a3c"/>
<ellipse cx="114.2" cy="43.7" rx="2.9" ry="1.1" fill="#3e4a5a"/>
<ellipse cx="90.8" cy="32.9" rx="3.1" ry="1.9" fill="#23272d"/>
<ellipse cx="87.5" cy="38.1" rx="2.6" ry="1.1" fill="#35363a"/>
<ellipse cx="104.7" cy="50.7" rx="2.8" ry="1.8" fill="#35363a"/>
<ellipse cx="79.1" cy="32.5" rx="1.6" ry="1.4" fill="#23272d"/>
<ellipse cx="103.6" cy="49.5" rx="1.8" ry="1.7" fill="#23272d"/>
<ellipse cx="108.3" cy="34.5" rx="1.5" ry="2.1" fill="#2a3340"/>
<ellipse cx="89.1" cy="55.4" rx="2.9" ry="1.4" fill="#4a5668"/>
<ellipse cx="118.5" cy="49.4" rx="2.0" ry="1.3" fill="#2c2f35"/>
<ellipse cx="84.9" cy="55.0" rx="2.0" ry="2.0" fill="#35363a"/>
<ellipse cx="77.1" cy="52.0" rx="2.9" ry="1.2" fill="#23272d"/>
<ellipse cx="82.7" cy="58.2" rx="2.3" ry="1.1" fill="#3b3a3c"/>
<ellipse cx="84.2" cy="31.9" rx="2.1" ry="2.1" fill="#3b3a3c"/>
<ellipse cx="77.7" cy="37.4" rx="2.6" ry="1.5" fill="#2a3340"/>
<ellipse cx="76.2" cy="57.3" rx="3.3" ry="2.3" fill="#4a5668"/>
<ellipse cx="69.7" cy="42.8" rx="2.9" ry="2.1" fill="#2a3340"/>
<ellipse cx="111.8" cy="54.9" rx="1.8" ry="1.1" fill="#3b3a3c"/>
<ellipse cx="81.3" cy="46.3" rx="1.9" ry="2.0" fill="#4a5668"/>
<ellipse cx="89.5" cy="53.8" rx="1.6" ry="1.5" fill="#35363a"/>
<ellipse cx="84.2" cy="57.5" rx="1.5" ry="2.0" fill="#3b3a3c"/>
<ellipse cx="63.5" cy="36.7" rx="2.3" ry="1.1" fill="#23272d"/>
<ellipse cx="72.1" cy="44.3" rx="3.1" ry="1.0" fill="#3b3a3c"/>
<ellipse cx="90.3" cy="48.9" rx="2.8" ry="1.6" fill="#4a5668"/>
<ellipse cx="71.4" cy="37.6" rx="3.3" ry="1.9" fill="#2c2f35"/>
<ellipse cx="81.0" cy="39.1" rx="1.6" ry="1.9" fill="#23272d"/>
<ellipse cx="86.6" cy="31.6" rx="3.4" ry="1.2" fill="#2c2f35"/>
<ellipse cx="92.2" cy="47.4" rx="2.9" ry="2.2" fill="#4a5668"/>
<ellipse cx="86.0" cy="59.5" rx="1.9" ry="2.1" fill="#23272d"/>
<ellipse cx="118.6" cy="45.7" rx="2.4" ry="1.7" fill="#23272d"/>
<ellipse cx="80.9" cy="36.9" rx="3.2" ry="1.5" fill="#4a5668"/>
<ellipse cx="67.8" cy="56.2" rx="1.6" ry="2.1" fill="#2a3340"/>
<ellipse cx="70.6" cy="40.6" rx="1.7" ry="1.7" fill="#2a3340"/>
<ellipse cx="60.2" cy="46.4" rx="1.4" ry="1.8" fill="#2a3340"/>
<ellipse cx="78.6" cy="44.3" rx="2.5" ry="1.2" fill="#3b3a3c"/>
<ellipse cx="86.6" cy="32.3" rx="2.5" ry="1.2" fill="#2a3340"/>
<ellipse cx="110.2" cy="35.8" rx="1.7" ry="1.1" fill="#3b3a3c"/>
<ellipse cx="79.6" cy="40.1" rx="3.0" ry="1.7" fill="#35363a"/>
<ellipse cx="76.2" cy="42.0" rx="2.7" ry="1.9" fill="#23272d"/>
<ellipse cx="96.9" cy="39.8" rx="2.9" ry="2.2" fill="#3e4a5a"/>
<ellipse cx="89.1" cy="33.2" rx="2.4" ry="1.7" fill="#2a3340"/>
<ellipse cx="80.1" cy="42.1" rx="3.1" ry="1.1" fill="#2a3340"/>
<ellipse cx="106.1" cy="43.0" rx="3.0" ry="2.2" fill="#2c2f35"/>
<ellipse cx="78.3" cy="49.8" rx="1.6" ry="1.3" fill="#4a5668"/>
<ellipse cx="67.3" cy="48.7" rx="3.0" ry="2.1" fill="#35363a"/>
<ellipse cx="91.9" cy="32.0" rx="2.2" ry="2.3" fill="#3b3a3c"/>
<ellipse cx="98.3" cy="57.7" rx="1.9" ry="2.1" fill="#4a5668"/>
<ellipse cx="82.8" cy="39.3" rx="1.8" ry="1.7" fill="#2c2f35"/>
<ellipse cx="68.3" cy="53.7" rx="1.8" ry="1.3" fill="#4a5668"/>
<ellipse cx="63.4" cy="53.9" rx="3.0" ry="1.8" fill="#4a5668"/>
<ellipse cx="83.6" cy="45.3" rx="2.1" ry="1.3" fill="#3e4a5a"/>
<ellipse cx="118.1" cy="43.4" rx="2.6" ry="2.0" fill="#4a5668"/>
<ellipse cx="113.2" cy="52.5" rx="1.5" ry="2.3" fill="#4a5668"/>
<ellipse cx="72.6" cy="45.1" rx="2.1" ry="1.2" fill="#2a3340"/>
<ellipse cx="88.1" cy="35.0" rx="2.3" ry="2.1" fill="#3b3a3c"/>
<ellipse cx="85.1" cy="53.5" rx="3.4" ry="1.5" fill="#35363a"/>
<ellipse cx="68.4" cy="52.2" rx="1.7" ry="1.0" fill="#3b3a3c"/>
<ellipse cx="78.6" cy="51.5" rx="3.2" ry="2.3" fill="#23272d"/>
<ellipse cx="84.9" cy="59.2" rx="2.8" ry="1.9" fill="#3b3a3c"/>
<ellipse cx="103.4" cy="41.2" rx="2.1" ry="1.4" fill="#2a3340"/>
<ellipse cx="80.7" cy="50.3" rx="2.8" ry="1.6" fill="#35363a"/>
<ellipse cx="59.2" cy="43.4" rx="3.2" ry="2.3" fill="#2c2f35"/>
<ellipse cx="84.7" cy="44.5" rx="1.8" ry="1.7" fill="#3e4a5a"/>
<ellipse cx="87.6" cy="38.8" rx="3.3" ry="1.4" fill="#2a3340"/>
<ellipse cx="90.5" cy="35.4" rx="2.5" ry="2.1" fill="#35363a"/>
<ellipse cx="89.9" cy="33.6" rx="1.6" ry="2.1" fill="#23272d"/>
<ellipse cx="57.3" cy="45.7" rx="3.1" ry="1.7" fill="#3e4a5a"/>
<ellipse cx="93.6" cy="39.6" rx="2.1" ry="1.6" fill="#2a3340"/>
<ellipse cx="80.8" cy="44.8" rx="3.2" ry="1.9" fill="#3b3a3c"/>
<ellipse cx="85.4" cy="33.6" rx="3.2" ry="1.0" fill="#4a5668"/>
<ellipse cx="93.7" cy="43.2" rx="2.5" ry="1.3" fill="#23272d"/>
<ellipse cx="106.3" cy="38.8" rx="2.5" ry="1.9" fill="#23272d"/>
<ellipse cx="62.3" cy="44.0" rx="2.8" ry="2.2" fill="#3e4a5a"/>
<ellipse cx="85.9" cy="51.3" rx="1.8" ry="1.5" fill="#3e4a5a"/>
<ellipse cx="113.6" cy="42.8" rx="2.9" ry="2.2" fill="#35363a"/>
<ellipse cx="99.4" cy="50.0" rx="3.2" ry="1.2" fill="#3e4a5a"/>
<ellipse cx="88.2" cy="53.1" rx="1.8" ry="2.2" fill="#2c2f35"/>
<ellipse cx="105.8" cy="55.6" rx="3.2" ry="1.9" fill="#3b3a3c"/>
<ellipse cx="107.0" cy="51.1" rx="3.3" ry="1.4" fill="#35363a"/>
<ellipse cx="114.5" cy="52.9" rx="3.0" ry="2.0" fill="#35363a"/>
<ellipse cx="87.0" cy="56.6" rx="3.3" ry="1.5" fill="#2c2f35"/>
<ellipse cx="82.2" cy="48.4" rx="2.4" ry="1.9" fill="#23272d"/>
<ellipse cx="105.6" cy="45.1" rx="1.4" ry="2.0" fill="#3e4a5a"/>
<ellipse cx="102.2" cy="48.3" rx="3.3" ry="2.1" fill="#23272d"/>
<ellipse cx="72.3" cy="39.7" rx="1.8" ry="1.4" fill="#3e4a5a"/>
<ellipse cx="94.5" cy="48.5" rx="2.4" ry="2.2" fill="#23272d"/>
<ellipse cx="73.2" cy="53.1" rx="3.2" ry="2.3" fill="#3e4a5a"/>
<ellipse cx="61.8" cy="45.4" rx="2.7" ry="1.5" fill="#2a3340"/>
<ellipse cx="94.1" cy="51.3" rx="3.1" ry="1.9" fill="#2a3340"/>
<ellipse cx="80.3" cy="60.0" rx="1.4" ry="1.8" fill="#4a5668"/>
<ellipse cx="81.5" cy="50.1" rx="3.1" ry="1.5" fill="#2a3340"/>
<ellipse cx="88.9" cy="36.9" rx="2.7" ry="1.3" fill="#23272d"/>
<ellipse cx="107.4" cy="51.4" rx="2.1" ry="2.2" fill="#35363a"/>
<ellipse cx="93.1" cy="33.8" rx="2.2" ry="1.2" fill="#3b3a3c"/>
<ellipse cx="64.7" cy="56.1" rx="2.4" ry="1.4" fill="#23272d"/>
<ellipse cx="99.6" cy="36.8" rx="2.1" ry="2.2" fill="#3e4a5a"/>
<ellipse cx="106.6" cy="55.9" rx="3.2" ry="2.0" fill="#4a5668"/>
<ellipse cx="66.4" cy="50.2" rx="1.7" ry="1.8" fill="#3b3a3c"/>
<ellipse cx="79.5" cy="34.1" rx="2.9" ry="2.3" fill="#2a3340"/>
<ellipse cx="63.6" cy="43.6" rx="2.5" ry="2.0" fill="#3e4a5a"/>
<ellipse cx="114.2" cy="47.7" rx="1.8" ry="1.0" fill="#4a5668"/>
<ellipse cx="83.4" cy="33.1" rx="2.1" ry="1.8" fill="#23272d"/>
<ellipse cx="108.9" cy="51.2" rx="3.1" ry="1.6" fill="#4a5668"/>
<ellipse cx="106.0" cy="41.3" rx="1.4" ry="1.1" fill="#35363a"/>
<ellipse cx="84.0" cy="53.0" rx="1.6" ry="1.9" fill="#2a3340"/>
<ellipse cx="111.5" cy="36.7" rx="2.1" ry="1.7" fill="#2a3340"/>
<ellipse cx="76.3" cy="39.9" rx="2.5" ry="2.1" fill="#4a5668"/>
<ellipse cx="86.6" cy="47.5" rx="2.8" ry="2.3" fill="#2a3340"/>
<ellipse cx="75.2" cy="47.3" rx="1.5" ry="2.1" fill="#3e4a5a"/>
<ellipse cx="71.4" cy="42.3" rx="2.3" ry="1.3" fill="#4a5668"/>
<ellipse cx="94.8" cy="55.9" rx="1.9" ry="1.2" fill="#2c2f35"/>
<ellipse cx="100.0" cy="59.3" rx="2.7" ry="1.3" fill="#2c2f35"/>
<ellipse cx="75.5" cy="49.8" rx="2.6" ry="1.6" fill="#3e4a5a"/>
<ellipse cx="88.1" cy="41.6" rx="3.0" ry="1.6" fill="#2a3340"/>
<ellipse cx="78.4" cy="40.9" rx="3.2" ry="1.8" fill="#35363a"/>
<ellipse cx="107.6" cy="45.4" rx="2.3" ry="1.8" fill="#4a5668"/>
<ellipse cx="112.8" cy="53.2" rx="2.6" ry="1.6" fill="#3b3a3c"/>
<ellipse cx="64.1" cy="55.4" rx="2.2" ry="2.3" fill="#4a5668"/>
<ellipse cx="75.0" cy="47.6" rx="2.5" ry="2.2" fill="#3e4a5a"/>
<ellipse cx="114.2" cy="45.3" rx="3.1" ry="1.2" fill="#3b3a3c"/>
<ellipse cx="62.1" cy="44.7" rx="3.0" ry="1.3" fill="#3e4a5a"/>
<ellipse cx="102.6" cy="42.3" rx="2.3" ry="1.1" fill="#3e4a5a"/>
<ellipse cx="118.4" cy="49.8" rx="2.1" ry="1.2" fill="#4a5668"/>
<ellipse cx="109.3" cy="47.5" rx="2.0" ry="1.6" fill="#2c2f35"/>
<ellipse cx="114.6" cy="50.7" rx="2.5" ry="1.3" fill="#2a3340"/>
<ellipse cx="94.0" cy="49.4" rx="2.8" ry="1.6" fill="#4a5668"/>
<ellipse cx="79.3" cy="40.1" rx="2.5" ry="1.9" fill="#3e4a5a"/>
<ellipse cx="85.0" cy="39.5" rx="1.6" ry="1.2" fill="#23272d"/>
<ellipse cx="69.8" cy="56.5" rx="2.2" ry="1.0" fill="#4a5668"/>
<ellipse cx="80.3" cy="52.1" rx="3.1" ry="2.1" fill="#23272d"/>
<ellipse cx="105.8" cy="58.1" rx="2.5" ry="1.0" fill="#4a5668"/>
<ellipse cx="105.8" cy="47.4" rx="1.6" ry="1.6" fill="#2c2f35"/>
<ellipse cx="87.7" cy="59.6" rx="3.0" ry="1.0" fill="#3e4a5a"/>
<ellipse cx="111.7" cy="61.0" rx="2.9" ry="1.3" fill="#6a7484"/>
<ellipse cx="127.6" cy="67.3" rx="3.2" ry="1.6" fill="#55606e"/>
<ellipse cx="131.6" cy="63.9" rx="3.1" ry="2.1" fill="#55606e"/>
<ellipse cx="129.9" cy="67.9" rx="1.7" ry="1.3" fill="#23272d"/>
<ellipse cx="140.6" cy="56.4" rx="2.1" ry="2.2" fill="#6a7484"/>
<ellipse cx="112.1" cy="57.3" rx="3.3" ry="1.5" fill="#3e4a5a"/>
<ellipse cx="118.7" cy="63.1" rx="2.2" ry="1.9" fill="#6a7484"/>
<ellipse cx="141.7" cy="50.2" rx="1.6" ry="1.8" fill="#6a7484"/>
<ellipse cx="134.0" cy="65.6" rx="1.5" ry="1.8" fill="#55606e"/>
<ellipse cx="114.5" cy="64.8" rx="2.1" ry="2.1" fill="#3e4a5a"/>
<ellipse cx="147.4" cy="61.0" rx="1.5" ry="1.8" fill="#2c2f35"/>
<ellipse cx="130.9" cy="60.6" rx="2.0" ry="1.5" fill="#23272d"/>
<ellipse cx="132.5" cy="50.3" rx="1.8" ry="1.6" fill="#55606e"/>
<ellipse cx="130.0" cy="60.1" rx="1.5" ry="1.4" fill="#2c2f35"/>
<ellipse cx="117.6" cy="59.9" rx="1.7" ry="1.5" fill="#23272d"/>
<ellipse cx="112.9" cy="58.3" rx="1.5" ry="1.0" fill="#6a7484"/>
<ellipse cx="130.8" cy="48.5" rx="1.9" ry="2.0" fill="#6a7484"/>
<ellipse cx="133.6" cy="70.8" rx="1.5" ry="1.2" fill="#6a7484"/>
<ellipse cx="138.9" cy="55.7" rx="1.8" ry="1.0" fill="#6a7484"/>
<ellipse cx="126.8" cy="52.1" rx="2.9" ry="1.7" fill="#6a7484"/>
<ellipse cx="125.4" cy="44.6" rx="2.6" ry="2.0" fill="#6a7484"/>
<ellipse cx="139.4" cy="52.8" rx="2.3" ry="2.2" fill="#4a5668"/>
<ellipse cx="118.6" cy="53.9" rx="2.7" ry="1.8" fill="#6a7484"/>
<ellipse cx="116.4" cy="62.4" rx="2.9" ry="1.1" fill="#6a7484"/>
<ellipse cx="116.0" cy="67.3" rx="2.6" ry="2.3" fill="#4a5668"/>
<ellipse cx="120.8" cy="70.7" rx="1.4" ry="2.0" fill="#3e4a5a"/>
<ellipse cx="142.9" cy="58.4" rx="1.8" ry="1.7" fill="#4a5668"/>
<ellipse cx="140.0" cy="51.7" rx="3.3" ry="1.3" fill="#2c2f35"/>
<ellipse cx="111.0" cy="53.4" rx="3.0" ry="2.1" fill="#55606e"/>
<ellipse cx="132.2" cy="68.8" rx="2.6" ry="1.8" fill="#6a7484"/>
<ellipse cx="145.6" cy="65.2" rx="2.7" ry="1.7" fill="#55606e"/>
<ellipse cx="148.6" cy="52.6" rx="2.4" ry="1.9" fill="#23272d"/>
<ellipse cx="125.1" cy="56.0" rx="2.2" ry="1.9" fill="#3e4a5a"/>
<ellipse cx="138.9" cy="61.3" rx="1.8" ry="1.6" fill="#23272d"/>
<ellipse cx="119.6" cy="52.4" rx="2.7" ry="1.1" fill="#4a5668"/>
<ellipse cx="148.8" cy="60.1" rx="2.1" ry="1.1" fill="#23272d"/>
<ellipse cx="132.6" cy="62.7" rx="3.3" ry="1.4" fill="#6a7484"/>
<ellipse cx="125.2" cy="69.4" rx="2.4" ry="2.1" fill="#55606e"/>
<ellipse cx="146.8" cy="66.2" rx="1.7" ry="1.4" fill="#55606e"/>
<ellipse cx="131.9" cy="68.1" rx="2.7" ry="2.3" fill="#2c2f35"/>
<ellipse cx="126.9" cy="56.6" rx="2.7" ry="2.3" fill="#6a7484"/>
<ellipse cx="136.7" cy="55.4" rx="2.8" ry="2.4" fill="#4a5668"/>
<ellipse cx="111.1" cy="65.1" rx="3.2" ry="1.3" fill="#3e4a5a"/>
<ellipse cx="124.6" cy="50.8" rx="2.6" ry="1.3" fill="#4a5668"/>
<ellipse cx="145.0" cy="60.0" rx="2.3" ry="1.2" fill="#2c2f35"/>
<ellipse cx="130.5" cy="64.3" rx="1.6" ry="1.1" fill="#2c2f35"/>
<ellipse cx="111.5" cy="61.2" rx="2.2" ry="2.1" fill="#4a5668"/>
<ellipse cx="122.9" cy="53.4" rx="3.0" ry="2.2" fill="#3e4a5a"/>
<ellipse cx="129.7" cy="56.3" rx="2.9" ry="2.2" fill="#4a5668"/>
<ellipse cx="117.4" cy="58.9" rx="2.2" ry="2.2" fill="#23272d"/>
<ellipse cx="129.9" cy="70.6" rx="3.0" ry="1.0" fill="#3e4a5a"/>
<ellipse cx="143.1" cy="59.8" rx="3.3" ry="1.6" fill="#3e4a5a"/>
<ellipse cx="122.3" cy="46.1" rx="3.0" ry="1.0" fill="#23272d"/>
<ellipse cx="127.3" cy="66.4" rx="1.7" ry="1.6" fill="#23272d"/>
<ellipse cx="147.9" cy="61.7" rx="2.2" ry="2.4" fill="#3e4a5a"/>
<ellipse cx="132.2" cy="48.5" rx="1.6" ry="1.7" fill="#55606e"/>
<ellipse cx="139.3" cy="48.1" rx="2.6" ry="1.7" fill="#55606e"/>
<ellipse cx="126.8" cy="62.8" rx="1.8" ry="1.1" fill="#4a5668"/>
<ellipse cx="145.9" cy="60.6" rx="3.2" ry="2.3" fill="#3e4a5a"/>
<ellipse cx="135.7" cy="51.0" rx="2.1" ry="1.3" fill="#3e4a5a"/>
<ellipse cx="146.8" cy="58.6" rx="1.6" ry="2.2" fill="#2c2f35"/>
<ellipse cx="119.0" cy="64.8" rx="3.1" ry="1.5" fill="#6a7484"/>
<ellipse cx="117.4" cy="60.4" rx="2.8" ry="2.2" fill="#4a5668"/>
<ellipse cx="139.2" cy="53.5" rx="3.1" ry="2.3" fill="#4a5668"/>
<ellipse cx="148.0" cy="58.4" rx="2.3" ry="1.2" fill="#4a5668"/>
<ellipse cx="144.9" cy="56.9" rx="3.4" ry="1.7" fill="#2c2f35"/>
<ellipse cx="130.3" cy="51.4" rx="2.7" ry="1.0" fill="#2c2f35"/>
<ellipse cx="114.0" cy="63.1" rx="3.2" ry="2.0" fill="#23272d"/>
<ellipse cx="130.9" cy="49.5" rx="1.7" ry="2.3" fill="#6a7484"/>
<ellipse cx="143.5" cy="57.0" rx="2.9" ry="1.9" fill="#23272d"/>
<ellipse cx="134.7" cy="67.3" rx="2.7" ry="1.1" fill="#55606e"/>
<ellipse cx="134.7" cy="64.1" rx="1.7" ry="1.1" fill="#23272d"/>
<ellipse cx="119.3" cy="61.0" rx="2.4" ry="1.4" fill="#6a7484"/>
<ellipse cx="115.1" cy="65.5" rx="2.6" ry="1.3" fill="#2c2f35"/>
<ellipse cx="111.4" cy="53.9" rx="1.8" ry="1.5" fill="#4a5668"/>
<ellipse cx="139.4" cy="63.2" rx="1.9" ry="1.2" fill="#2c2f35"/>
<ellipse cx="120.3" cy="49.3" rx="2.6" ry="1.6" fill="#6a7484"/>
<ellipse cx="124.3" cy="53.3" rx="1.7" ry="1.0" fill="#6a7484"/>
<ellipse cx="141.4" cy="52.6" rx="1.6" ry="1.9" fill="#6a7484"/>
<ellipse cx="131.6" cy="54.6" rx="3.0" ry="2.2" fill="#55606e"/>
<ellipse cx="135.8" cy="70.5" rx="2.3" ry="1.5" fill="#4a5668"/>
<ellipse cx="132.0" cy="70.9" rx="1.6" ry="2.0" fill="#55606e"/>
<ellipse cx="113.4" cy="51.4" rx="3.3" ry="1.8" fill="#4a5668"/>
<ellipse cx="130.1" cy="56.0" rx="2.4" ry="2.1" fill="#55606e"/>
<ellipse cx="130.4" cy="45.4" rx="2.7" ry="2.0" fill="#23272d"/>
<ellipse cx="139.3" cy="57.3" rx="2.8" ry="1.0" fill="#6a7484"/>
<ellipse cx="140.9" cy="66.5" rx="2.9" ry="1.8" fill="#4a5668"/>
<ellipse cx="139.4" cy="49.4" rx="3.1" ry="1.1" fill="#4a5668"/>
<ellipse cx="134.6" cy="66.0" rx="2.9" ry="1.2" fill="#4a5668"/>
<ellipse cx="141.1" cy="48.7" rx="2.0" ry="1.1" fill="#3e4a5a"/>
<ellipse cx="144.8" cy="65.5" rx="2.9" ry="1.7" fill="#55606e"/>
<ellipse cx="123.4" cy="65.0" rx="2.2" ry="1.5" fill="#23272d"/>
<ellipse cx="134.2" cy="55.1" rx="2.5" ry="1.4" fill="#6a7484"/>
<ellipse cx="117.7" cy="64.4" rx="2.0" ry="1.4" fill="#2c2f35"/>
<ellipse cx="130.8" cy="53.1" rx="2.6" ry="2.0" fill="#6a7484"/>
<ellipse cx="119.1" cy="58.6" rx="2.2" ry="2.0" fill="#23272d"/>
<ellipse cx="123.3" cy="61.0" rx="2.9" ry="1.6" fill="#2c2f35"/>
<ellipse cx="131.9" cy="66.1" rx="2.8" ry="1.0" fill="#6a7484"/>
<ellipse cx="133.9" cy="55.8" rx="2.6" ry="1.1" fill="#4a5668"/>
<ellipse cx="125.9" cy="62.2" rx="2.7" ry="2.0" fill="#23272d"/>
<ellipse cx="129.3" cy="69.7" rx="3.3" ry="1.7" fill="#2c2f35"/>
<ellipse cx="145.9" cy="62.3" rx="1.8" ry="1.7" fill="#3e4a5a"/>
<ellipse cx="113.6" cy="50.0" rx="1.9" ry="2.0" fill="#55606e"/>
<ellipse cx="111.0" cy="56.8" rx="2.9" ry="1.4" fill="#3e4a5a"/>
<ellipse cx="150.1" cy="63.3" rx="2.1" ry="2.1" fill="#6a7484"/>
<ellipse cx="138.3" cy="61.8" rx="2.9" ry="2.2" fill="#55606e"/>
<ellipse cx="140.2" cy="51.9" rx="3.0" ry="1.5" fill="#3e4a5a"/>
<ellipse cx="122.7" cy="69.8" rx="2.1" ry="2.2" fill="#23272d"/>
<ellipse cx="122.4" cy="61.1" rx="2.0" ry="2.3" fill="#3e4a5a"/>
<ellipse cx="125.8" cy="45.2" rx="3.3" ry="1.6" fill="#6a7484"/>
<ellipse cx="110.4" cy="63.0" rx="2.7" ry="1.0" fill="#55606e"/>
<ellipse cx="120.6" cy="53.8" rx="2.6" ry="1.9" fill="#6a7484"/>
<ellipse cx="142.5" cy="51.1" rx="2.3" ry="1.4" fill="#2c2f35"/>
<ellipse cx="123.8" cy="57.3" rx="2.3" ry="2.2" fill="#2c2f35"/>
<ellipse cx="135.8" cy="55.9" rx="2.1" ry="1.5" fill="#3e4a5a"/>
<ellipse cx="116.5" cy="48.5" rx="2.6" ry="1.7" fill="#2c2f35"/>
<ellipse cx="124.8" cy="59.0" rx="1.8" ry="1.1" fill="#23272d"/>
<ellipse cx="117.0" cy="47.2" rx="1.5" ry="1.8" fill="#3e4a5a"/>
<ellipse cx="147.4" cy="61.2" rx="2.7" ry="2.1" fill="#23272d"/>
<ellipse cx="126.8" cy="60.6" rx="2.3" ry="1.3" fill="#2c2f35"/>
<ellipse cx="3.1" cy="42.5" rx="3.0" ry="2.2" fill="#55606e"/>
<ellipse cx="3.4" cy="47.9" rx="2.0" ry="1.1" fill="#4d5d72"/>
<ellipse cx="25.5" cy="42.5" rx="2.4" ry="2.3" fill="#3e4a5a"/>
<ellipse cx="16.9" cy="37.0" rx="2.0" ry="1.5" fill="#5f7088"/>
<ellipse cx="38.2" cy="41.4" rx="1.5" ry="1.5" fill="#4a5668"/>
<ellipse cx="36.0" cy="41.2" rx="3.0" ry="2.1" fill="#5f7088"/>
<ellipse cx="22.1" cy="53.4" rx="3.0" ry="1.3" fill="#6a7484"/>
<ellipse cx="11.8" cy="57.7" rx="2.9" ry="1.9" fill="#4d5d72"/>
<ellipse cx="39.4" cy="53.5" rx="1.9" ry="1.8" fill="#55606e"/>
<ellipse cx="26.0" cy="47.6" rx="3.3" ry="1.9" fill="#55606e"/>
<ellipse cx="27.5" cy="62.2" rx="1.8" ry="1.1" fill="#55606e"/>
<ellipse cx="25.9" cy="39.5" rx="2.2" ry="1.1" fill="#3e4a5a"/>
<ellipse cx="25.8" cy="48.5" rx="2.1" ry="1.5" fill="#4a5668"/>
<ellipse cx="18.9" cy="47.5" rx="2.7" ry="1.7" fill="#3e4a5a"/>
<ellipse cx="22.9" cy="49.9" rx="3.3" ry="1.9" fill="#4a5668"/>
<ellipse cx="38.4" cy="42.6" rx="2.8" ry="2.1" fill="#4a5668"/>
<ellipse cx="23.3" cy="65.4" rx="3.1" ry="2.1" fill="#4d5d72"/>
<ellipse cx="20.5" cy="62.0" rx="3.0" ry="2.2" fill="#6a7484"/>
<ellipse cx="10.7" cy="51.1" rx="3.1" ry="1.4" fill="#55606e"/>
<ellipse cx="9.7" cy="33.4" rx="3.0" ry="1.7" fill="#55606e"/>
<ellipse cx="33.5" cy="30.6" rx="2.2" ry="2.4" fill="#3e4a5a"/>
<ellipse cx="43.8" cy="43.1" rx="1.9" ry="1.6" fill="#4d5d72"/>
<ellipse cx="36.7" cy="32.8" rx="3.1" ry="1.6" fill="#6a7484"/>
<ellipse cx="17.3" cy="46.4" rx="2.6" ry="1.3" fill="#5f7088"/>
<ellipse cx="15.6" cy="59.7" rx="2.0" ry="1.6" fill="#4a5668"/>
<ellipse cx="28.3" cy="26.0" rx="3.2" ry="1.6" fill="#4d5d72"/>
<ellipse cx="31.8" cy="25.5" rx="3.0" ry="1.2" fill="#4a5668"/>
<ellipse cx="31.3" cy="41.1" rx="3.0" ry="1.7" fill="#3e4a5a"/>
<ellipse cx="27.2" cy="63.1" rx="2.7" ry="1.4" fill="#4a5668"/>
<ellipse cx="33.1" cy="31.5" rx="1.6" ry="2.2" fill="#3e4a5a"/>
<ellipse cx="13.9" cy="48.1" rx="2.3" ry="2.2" fill="#3e4a5a"/>
<ellipse cx="13.8" cy="34.2" rx="2.3" ry="1.5" fill="#4d5d72"/>
<ellipse cx="31.6" cy="43.0" rx="2.4" ry="1.9" fill="#3e4a5a"/>
<ellipse cx="20.3" cy="64.7" rx="2.7" ry="2.1" fill="#55606e"/>
<ellipse cx="8.9" cy="45.6" rx="1.6" ry="2.0" fill="#6a7484"/>
<ellipse cx="17.7" cy="55.0" rx="3.0" ry="2.2" fill="#55606e"/>
<ellipse cx="13.5" cy="35.9" rx="1.6" ry="1.4" fill="#4a5668"/>
<ellipse cx="20.5" cy="54.5" rx="2.4" ry="2.1" fill="#4a5668"/>
<ellipse cx="0.2" cy="47.5" rx="2.7" ry="1.6" fill="#6a7484"/>
<ellipse cx="5.6" cy="59.3" rx="2.2" ry="1.4" fill="#5f7088"/>
<ellipse cx="14.8" cy="30.8" rx="2.9" ry="2.2" fill="#6a7484"/>
<ellipse cx="15.2" cy="64.0" rx="1.7" ry="2.1" fill="#4a5668"/>
<ellipse cx="29.8" cy="32.3" rx="3.0" ry="1.6" fill="#6a7484"/>
<ellipse cx="6.2" cy="55.2" rx="2.9" ry="2.3" fill="#55606e"/>
<ellipse cx="41.0" cy="43.7" rx="1.6" ry="1.4" fill="#55606e"/>
<ellipse cx="10.0" cy="28.3" rx="2.6" ry="1.8" fill="#3e4a5a"/>
<ellipse cx="20.1" cy="32.3" rx="1.5" ry="1.1" fill="#3e4a5a"/>
<ellipse cx="38.6" cy="54.2" rx="1.6" ry="1.2" fill="#3e4a5a"/>
<ellipse cx="34.0" cy="48.7" rx="2.1" ry="2.1" fill="#4a5668"/>
<ellipse cx="24.7" cy="58.6" rx="2.2" ry="1.8" fill="#6a7484"/>
<ellipse cx="15.2" cy="40.7" rx="1.5" ry="1.9" fill="#6a7484"/>
<ellipse cx="42.7" cy="39.5" rx="1.8" ry="2.1" fill="#4a5668"/>
<ellipse cx="34.4" cy="42.1" rx="2.2" ry="2.2" fill="#4a5668"/>
<ellipse cx="13.5" cy="61.5" rx="2.0" ry="1.2" fill="#4d5d72"/>
<ellipse cx="6.8" cy="60.3" rx="3.1" ry="1.7" fill="#6a7484"/>
<ellipse cx="8.5" cy="52.8" rx="1.7" ry="1.0" fill="#6a7484"/>
<ellipse cx="2.6" cy="39.5" rx="3.4" ry="1.9" fill="#55606e"/>
<ellipse cx="22.8" cy="25.5" rx="2.4" ry="1.7" fill="#4d5d72"/>
<ellipse cx="7.2" cy="45.0" rx="2.8" ry="1.0" fill="#55606e"/>
<ellipse cx="26.8" cy="24.2" rx="1.6" ry="2.2" fill="#5f7088"/>
<ellipse cx="1.5" cy="49.9" rx="2.4" ry="1.5" fill="#3e4a5a"/>
<ellipse cx="19.3" cy="57.1" rx="2.0" ry="1.6" fill="#6a7484"/>
<ellipse cx="34.3" cy="54.9" rx="2.5" ry="1.5" fill="#6a7484"/>
<ellipse cx="5.5" cy="56.6" rx="2.9" ry="1.5" fill="#3e4a5a"/>
<ellipse cx="35.9" cy="34.8" rx="3.4" ry="1.5" fill="#4d5d72"/>
<ellipse cx="31.5" cy="26.2" rx="3.4" ry="1.7" fill="#55606e"/>
<ellipse cx="7.3" cy="51.0" rx="2.3" ry="2.1" fill="#6a7484"/>
<ellipse cx="20.6" cy="33.8" rx="2.0" ry="2.0" fill="#3e4a5a"/>
<ellipse cx="24.9" cy="52.7" rx="2.5" ry="1.4" fill="#6a7484"/>
<ellipse cx="13.2" cy="62.8" rx="1.9" ry="1.9" fill="#3e4a5a"/>
<ellipse cx="43.4" cy="42.8" rx="2.1" ry="1.9" fill="#4d5d72"/>
<ellipse cx="18.6" cy="33.0" rx="2.9" ry="1.0" fill="#5f7088"/>
<ellipse cx="5.6" cy="32.8" rx="2.4" ry="1.6" fill="#55606e"/>
<ellipse cx="23.0" cy="61.4" rx="2.4" ry="1.4" fill="#4d5d72"/>
<ellipse cx="22.8" cy="23.8" rx="1.8" ry="2.3" fill="#4d5d72"/>
<ellipse cx="23.2" cy="28.8" rx="3.0" ry="1.9" fill="#55606e"/>
<ellipse cx="23.3" cy="49.8" rx="3.2" ry="1.2" fill="#4d5d72"/>
<ellipse cx="28.7" cy="65.9" rx="3.3" ry="1.0" fill="#55606e"/>
<ellipse cx="21.1" cy="54.6" rx="2.8" ry="1.7" fill="#3e4a5a"/>
<ellipse cx="19.4" cy="48.3" rx="1.7" ry="2.2" fill="#6a7484"/>
<ellipse cx="15.3" cy="52.0" rx="1.5" ry="2.3" fill="#3e4a5a"/>
<ellipse cx="2.2" cy="49.8" rx="1.9" ry="1.3" fill="#55606e"/>
<ellipse cx="43.6" cy="43.0" rx="2.7" ry="1.7" fill="#3e4a5a"/>
<ellipse cx="37.9" cy="39.8" rx="3.3" ry="1.7" fill="#55606e"/>
<ellipse cx="40.0" cy="34.9" rx="2.5" ry="1.2" fill="#4d5d72"/>
<ellipse cx="24.7" cy="28.6" rx="2.8" ry="1.1" fill="#5f7088"/>
<ellipse cx="19.0" cy="33.3" rx="1.5" ry="1.4" fill="#6a7484"/>
<ellipse cx="14.5" cy="30.9" rx="2.6" ry="2.2" fill="#6a7484"/>
<ellipse cx="10.8" cy="52.1" rx="2.4" ry="1.4" fill="#5f7088"/>
<ellipse cx="14.7" cy="37.4" rx="3.0" ry="2.3" fill="#3e4a5a"/>
<ellipse cx="96.5" cy="72.6" rx="2.0" ry="1.4" fill="#4d5d72"/>
<ellipse cx="87.6" cy="62.4" rx="3.1" ry="1.1" fill="#4a5668"/>
<ellipse cx="64.0" cy="74.4" rx="2.5" ry="1.4" fill="#8092aa"/>
<ellipse cx="71.2" cy="59.7" rx="2.2" ry="2.1" fill="#3e4a5a"/>
<ellipse cx="76.0" cy="70.4" rx="1.9" ry="1.0" fill="#4d5d72"/>
<ellipse cx="67.8" cy="72.8" rx="3.1" ry="1.7" fill="#3e4e62"/>
<ellipse cx="84.2" cy="72.8" rx="1.8" ry="1.2" fill="#4d5d72"/>
<ellipse cx="83.7" cy="63.2" rx="2.4" ry="1.9" fill="#4d5d72"/>
<ellipse cx="51.4" cy="71.5" rx="2.0" ry="2.0" fill="#8092aa"/>
<ellipse cx="88.3" cy="62.3" rx="3.0" ry="1.6" fill="#4a5668"/>
<ellipse cx="105.3" cy="69.3" rx="2.8" ry="1.8" fill="#4d5d72"/>
<ellipse cx="67.7" cy="63.6" rx="1.5" ry="2.3" fill="#4a5668"/>
<ellipse cx="70.8" cy="70.1" rx="3.2" ry="1.9" fill="#3e4e62"/>
<ellipse cx="48.2" cy="69.4" rx="1.8" ry="1.7" fill="#6a7484"/>
<ellipse cx="55.8" cy="71.7" rx="3.0" ry="1.1" fill="#6a7484"/>
<ellipse cx="72.9" cy="69.1" rx="2.5" ry="2.1" fill="#4d5d72"/>
<ellipse cx="64.0" cy="64.1" rx="2.0" ry="1.5" fill="#55606e"/>
<ellipse cx="92.5" cy="74.3" rx="3.1" ry="2.2" fill="#3e4a5a"/>
<ellipse cx="89.9" cy="72.6" rx="3.0" ry="1.9" fill="#3e4e62"/>
<ellipse cx="89.6" cy="67.5" rx="3.4" ry="2.2" fill="#3e4a5a"/>
<ellipse cx="81.3" cy="70.6" rx="3.3" ry="1.3" fill="#8092aa"/>
<ellipse cx="80.9" cy="65.9" rx="2.7" ry="1.0" fill="#4a5668"/>
<ellipse cx="75.3" cy="62.5" rx="2.6" ry="2.1" fill="#55606e"/>
<ellipse cx="72.3" cy="76.8" rx="2.7" ry="1.0" fill="#4d5d72"/>
<ellipse cx="95.6" cy="63.8" rx="2.6" ry="2.0" fill="#55606e"/>
<ellipse cx="50.4" cy="62.0" rx="2.2" ry="1.1" fill="#5f7088"/>
<ellipse cx="61.2" cy="61.2" rx="1.8" ry="1.6" fill="#4a5668"/>
<ellipse cx="55.3" cy="64.6" rx="1.9" ry="1.5" fill="#3e4e62"/>
<ellipse cx="84.9" cy="68.7" rx="2.7" ry="2.1" fill="#4a5668"/>
<ellipse cx="44.6" cy="64.3" rx="3.2" ry="1.6" fill="#3e4a5a"/>
<ellipse cx="49.6" cy="74.6" rx="2.9" ry="2.4" fill="#8092aa"/>
<ellipse cx="45.8" cy="64.1" rx="2.2" ry="1.9" fill="#8092aa"/>
<ellipse cx="59.2" cy="63.6" rx="3.2" ry="1.3" fill="#8092aa"/>
<ellipse cx="90.1" cy="70.5" rx="2.2" ry="2.1" fill="#6a7484"/>
<ellipse cx="77.7" cy="63.0" rx="3.0" ry="1.5" fill="#8092aa"/>
<ellipse cx="90.5" cy="67.1" rx="3.1" ry="1.3" fill="#6a7484"/>
<ellipse cx="35.7" cy="67.3" rx="2.6" ry="1.7" fill="#3e4e62"/>
<ellipse cx="46.4" cy="64.1" rx="1.6" ry="2.1" fill="#55606e"/>
<ellipse cx="93.3" cy="63.3" rx="2.7" ry="1.1" fill="#6a7484"/>
<ellipse cx="68.6" cy="75.2" rx="2.5" ry="1.9" fill="#3e4e62"/>
<ellipse cx="97.8" cy="71.9" rx="1.5" ry="1.1" fill="#4a5668"/>
<ellipse cx="42.4" cy="71.5" rx="3.1" ry="1.9" fill="#5f7088"/>
<ellipse cx="68.9" cy="75.2" rx="2.5" ry="1.9" fill="#3e4e62"/>
<ellipse cx="72.8" cy="66.6" rx="3.1" ry="1.8" fill="#8092aa"/>
<ellipse cx="72.2" cy="59.8" rx="2.0" ry="1.6" fill="#55606e"/>
<ellipse cx="72.9" cy="65.7" rx="3.3" ry="2.3" fill="#3e4e62"/>
<ellipse cx="58.1" cy="69.6" rx="3.4" ry="2.3" fill="#3e4e62"/>
<ellipse cx="81.5" cy="64.2" rx="2.7" ry="2.0" fill="#6a7484"/>
<ellipse cx="83.0" cy="65.8" rx="3.1" ry="1.5" fill="#6a7484"/>
<ellipse cx="61.5" cy="66.5" rx="2.9" ry="1.4" fill="#8092aa"/>
<ellipse cx="55.8" cy="71.1" rx="1.7" ry="2.2" fill="#6a7484"/>
<ellipse cx="82.8" cy="69.2" rx="3.3" ry="1.9" fill="#8092aa"/>
<ellipse cx="94.1" cy="63.7" rx="1.4" ry="1.6" fill="#4d5d72"/>
<ellipse cx="75.3" cy="72.0" rx="1.6" ry="2.0" fill="#55606e"/>
<ellipse cx="78.3" cy="68.3" rx="1.6" ry="2.2" fill="#3e4e62"/>
<ellipse cx="56.4" cy="76.1" rx="2.2" ry="2.1" fill="#8092aa"/>
<ellipse cx="87.1" cy="68.2" rx="1.6" ry="2.2" fill="#5f7088"/>
<ellipse cx="79.5" cy="64.1" rx="3.1" ry="1.1" fill="#5f7088"/>
<ellipse cx="71.8" cy="62.5" rx="2.0" ry="2.0" fill="#5f7088"/>
<ellipse cx="56.5" cy="72.4" rx="2.4" ry="2.2" fill="#3e4a5a"/>
<ellipse cx="57.9" cy="70.2" rx="1.9" ry="1.8" fill="#3e4e62"/>
<ellipse cx="80.4" cy="68.4" rx="2.2" ry="1.7" fill="#4d5d72"/>
<ellipse cx="50.3" cy="75.0" rx="1.6" ry="2.1" fill="#5f7088"/>
<ellipse cx="51.8" cy="72.3" rx="3.3" ry="2.1" fill="#3e4a5a"/>
<ellipse cx="37.2" cy="65.4" rx="1.6" ry="1.0" fill="#8092aa"/>
<ellipse cx="71.6" cy="64.9" rx="3.1" ry="2.0" fill="#8092aa"/>
<ellipse cx="80.2" cy="76.2" rx="2.3" ry="1.8" fill="#5f7088"/>
<ellipse cx="83.4" cy="67.0" rx="1.4" ry="1.3" fill="#3e4a5a"/>
<ellipse cx="104.0" cy="68.9" rx="2.0" ry="2.0" fill="#4a5668"/>
<ellipse cx="66.9" cy="64.2" rx="2.5" ry="2.1" fill="#6a7484"/>
<ellipse cx="76.7" cy="65.6" rx="3.1" ry="1.6" fill="#5f7088"/>
<ellipse cx="102.7" cy="69.3" rx="2.8" ry="1.3" fill="#3e4a5a"/>
<ellipse cx="74.1" cy="72.5" rx="2.1" ry="1.2" fill="#3e4a5a"/>
<ellipse cx="88.2" cy="62.7" rx="2.8" ry="1.5" fill="#5f7088"/>
<ellipse cx="73.2" cy="66.0" rx="2.5" ry="2.1" fill="#4a5668"/>
<ellipse cx="73.5" cy="61.0" rx="2.2" ry="1.3" fill="#4a5668"/>
<ellipse cx="46.0" cy="61.9" rx="3.1" ry="1.4" fill="#55606e"/>
<ellipse cx="60.4" cy="68.4" rx="3.1" ry="1.5" fill="#6a7484"/>
<ellipse cx="47.6" cy="71.3" rx="3.1" ry="1.7" fill="#4d5d72"/>
<ellipse cx="82.2" cy="73.5" rx="2.4" ry="1.3" fill="#6a7484"/>
<ellipse cx="76.5" cy="65.1" rx="2.7" ry="1.5" fill="#6a7484"/>
<ellipse cx="80.8" cy="67.4" rx="1.6" ry="1.3" fill="#8092aa"/>
<ellipse cx="43.7" cy="73.0" rx="3.2" ry="1.1" fill="#4a5668"/>
<ellipse cx="79.4" cy="62.5" rx="1.8" ry="1.5" fill="#6a7484"/>
<ellipse cx="70.3" cy="62.8" rx="3.0" ry="1.2" fill="#6a7484"/>
<ellipse cx="42.4" cy="64.8" rx="2.5" ry="1.5" fill="#6a7484"/>
<ellipse cx="87.1" cy="74.0" rx="3.2" ry="1.5" fill="#3e4e62"/>
<ellipse cx="77.3" cy="61.4" rx="1.9" ry="1.0" fill="#55606e"/>
<ellipse cx="99.9" cy="69.7" rx="1.7" ry="1.4" fill="#4a5668"/>
<ellipse cx="86.0" cy="62.0" rx="3.1" ry="1.1" fill="#4d5d72"/>
<ellipse cx="89.7" cy="72.3" rx="3.3" ry="1.0" fill="#5f7088"/>
<ellipse cx="56.3" cy="71.7" rx="3.0" ry="2.1" fill="#5f7088"/>
<ellipse cx="103.6" cy="66.9" rx="2.4" ry="1.6" fill="#6a7484"/>
<ellipse cx="53.9" cy="70.5" rx="3.1" ry="2.2" fill="#6a7484"/>
<ellipse cx="36.0" cy="68.6" rx="1.4" ry="1.3" fill="#4d5d72"/>
<ellipse cx="69.3" cy="67.0" rx="3.2" ry="1.6" fill="#4a5668"/>
<ellipse cx="79.8" cy="68.0" rx="2.3" ry="1.8" fill="#3e4e62"/>
<ellipse cx="68.6" cy="60.1" rx="2.3" ry="2.4" fill="#8092aa"/>
<ellipse cx="48.8" cy="74.7" rx="3.0" ry="2.0" fill="#4a5668"/>
<ellipse cx="44.8" cy="70.8" rx="3.0" ry="2.0" fill="#3e4e62"/>
<ellipse cx="42.9" cy="73.1" rx="2.7" ry="2.3" fill="#6a7484"/>
<ellipse cx="55.0" cy="72.8" rx="2.4" ry="2.1" fill="#8092aa"/>
<ellipse cx="70.5" cy="74.0" rx="1.8" ry="2.1" fill="#6a7484"/>
<ellipse cx="43.5" cy="71.8" rx="3.2" ry="2.0" fill="#8092aa"/>
<ellipse cx="75.9" cy="74.4" rx="1.9" ry="2.3" fill="#55606e"/>
<ellipse cx="76.3" cy="68.4" rx="1.6" ry="1.1" fill="#6a7484"/>
<ellipse cx="39.4" cy="71.7" rx="2.2" ry="2.2" fill="#3e4a5a"/>
<ellipse cx="105.0" cy="68.2" rx="2.1" ry="1.1" fill="#4a5668"/>
<ellipse cx="85.7" cy="61.9" rx="1.5" ry="2.0" fill="#4d5d72"/>
<ellipse cx="76.6" cy="64.9" rx="2.0" ry="1.5" fill="#4d5d72"/>
<ellipse cx="142.3" cy="74.2" rx="1.6" ry="2.0" fill="#4d5d72"/>
<ellipse cx="137.2" cy="71.0" rx="1.8" ry="1.2" fill="#3e4a5a"/>
<ellipse cx="133.4" cy="74.2" rx="2.8" ry="1.6" fill="#3e4e62"/>
<ellipse cx="133.2" cy="76.0" rx="2.9" ry="1.6" fill="#4d5d72"/>
<ellipse cx="140.0" cy="67.0" rx="2.7" ry="2.0" fill="#3e4a5a"/>
<ellipse cx="145.4" cy="67.6" rx="3.4" ry="1.1" fill="#5f7088"/>
<ellipse cx="135.8" cy="71.0" rx="2.4" ry="1.4" fill="#4d5d72"/>
<ellipse cx="141.2" cy="68.7" rx="2.9" ry="2.1" fill="#3e4e62"/>
<ellipse cx="137.8" cy="68.6" rx="3.1" ry="2.1" fill="#3e4e62"/>
<ellipse cx="144.2" cy="67.0" rx="1.8" ry="2.1" fill="#5f7088"/>
<ellipse cx="145.6" cy="70.0" rx="3.1" ry="2.3" fill="#8092aa"/>
<ellipse cx="139.4" cy="69.1" rx="1.4" ry="1.1" fill="#5f7088"/>
<ellipse cx="141.6" cy="64.8" rx="1.9" ry="1.1" fill="#8092aa"/>
<ellipse cx="147.0" cy="70.2" rx="3.3" ry="1.0" fill="#5f7088"/>
<ellipse cx="146.8" cy="64.1" rx="1.5" ry="2.0" fill="#4d5d72"/>
<ellipse cx="133.7" cy="67.7" rx="2.4" ry="1.1" fill="#8092aa"/>
<ellipse cx="142.8" cy="65.3" rx="2.1" ry="1.4" fill="#3e4a5a"/>
<ellipse cx="149.0" cy="73.1" rx="2.9" ry="1.5" fill="#8092aa"/>
<ellipse cx="138.2" cy="76.5" rx="3.2" ry="1.6" fill="#4d5d72"/>
<ellipse cx="146.8" cy="71.3" rx="1.7" ry="1.2" fill="#3e4a5a"/>
<ellipse cx="136.4" cy="76.2" rx="3.4" ry="2.3" fill="#3e4a5a"/>
<ellipse cx="128.8" cy="70.0" rx="3.3" ry="1.1" fill="#3e4a5a"/>
<ellipse cx="130.5" cy="74.3" rx="2.0" ry="1.0" fill="#4d5d72"/>
<ellipse cx="144.8" cy="69.2" rx="1.4" ry="2.3" fill="#5f7088"/>
<ellipse cx="138.7" cy="65.8" rx="2.7" ry="2.0" fill="#4d5d72"/>
<ellipse cx="148.8" cy="65.7" rx="2.1" ry="2.1" fill="#4d5d72"/>
<ellipse cx="138.9" cy="73.9" rx="2.6" ry="2.3" fill="#4d5d72"/>
<ellipse cx="149.9" cy="69.9" rx="2.4" ry="2.3" fill="#3e4a5a"/>
<ellipse cx="148.9" cy="68.9" rx="2.2" ry="1.1" fill="#8092aa"/>
<ellipse cx="147.7" cy="65.0" rx="2.3" ry="2.2" fill="#3e4e62"/>
<ellipse cx="138.5" cy="64.4" rx="3.3" ry="1.4" fill="#8092aa"/>
<ellipse cx="148.1" cy="69.5" rx="2.4" ry="1.2" fill="#5f7088"/>
<ellipse cx="146.8" cy="70.5" rx="3.1" ry="1.4" fill="#5f7088"/>
<ellipse cx="148.3" cy="74.1" rx="3.1" ry="1.1" fill="#4d5d72"/>
<ellipse cx="139.9" cy="66.0" rx="2.4" ry="1.9" fill="#5f7088"/>
<ellipse cx="5.9" cy="68.6" rx="2.3" ry="1.2" fill="#8092aa"/>
<ellipse cx="11.5" cy="70.1" rx="2.5" ry="2.0" fill="#4d5d72"/>
<ellipse cx="13.8" cy="71.2" rx="2.3" ry="2.1" fill="#3e4e62"/>
<ellipse cx="11.4" cy="68.4" rx="1.6" ry="2.1" fill="#5f7088"/>
<ellipse cx="7.6" cy="66.7" rx="2.9" ry="1.5" fill="#8092aa"/>
<ellipse cx="12.6" cy="69.6" rx="3.1" ry="2.2" fill="#8092aa"/>
<ellipse cx="1.9" cy="68.2" rx="2.1" ry="1.2" fill="#3e4e62"/>
<ellipse cx="4.3" cy="67.0" rx="3.0" ry="1.6" fill="#5f7088"/>
<ellipse cx="6.2" cy="76.6" rx="3.2" ry="2.3" fill="#4d5d72"/>
<ellipse cx="10.7" cy="77.6" rx="2.1" ry="1.0" fill="#8092aa"/>
<ellipse cx="12.7" cy="69.5" rx="3.2" ry="1.6" fill="#4d5d72"/>
<ellipse cx="11.6" cy="68.9" rx="2.6" ry="2.0" fill="#4d5d72"/>
<ellipse cx="11.7" cy="74.6" rx="3.0" ry="1.5" fill="#4d5d72"/>
<ellipse cx="5.5" cy="77.6" rx="2.9" ry="1.0" fill="#5f7088"/>
<ellipse cx="11.3" cy="71.4" rx="3.2" ry="1.9" fill="#4d5d72"/>
<ellipse cx="13.0" cy="68.4" rx="1.5" ry="1.2" fill="#8092aa"/>
<ellipse cx="14.0" cy="68.0" rx="3.2" ry="1.6" fill="#8092aa"/>
<ellipse cx="7.2" cy="72.0" rx="2.2" ry="1.2" fill="#5f7088"/>
<ellipse cx="7.2" cy="70.1" rx="1.6" ry="1.6" fill="#3e4e62"/>
<ellipse cx="9.0" cy="72.6" rx="2.4" ry="2.2" fill="#3e4e62"/>
<ellipse cx="16.3" cy="71.5" rx="2.2" ry="1.4" fill="#4d5d72"/>
<ellipse cx="6.2" cy="74.3" rx="3.4" ry="1.9" fill="#5f7088"/>
<ellipse cx="-0.3" cy="69.0" rx="1.4" ry="1.6" fill="#5f7088"/>
<ellipse cx="0.6" cy="75.4" rx="2.0" ry="2.1" fill="#4d5d72"/>
<ellipse cx="9.4" cy="66.7" rx="1.6" ry="1.3" fill="#8092aa"/>
<ellipse cx="11.3" cy="72.6" rx="2.4" ry="2.3" fill="#3e4e62"/>
<ellipse cx="10.7" cy="75.7" rx="2.3" ry="2.1" fill="#4d5d72"/>
<ellipse cx="2.8" cy="71.8" rx="1.4" ry="1.8" fill="#4d5d72"/>
<ellipse cx="7.2" cy="67.2" rx="2.2" ry="2.0" fill="#5f7088"/>
<ellipse cx="6.7" cy="72.5" rx="1.9" ry="1.8" fill="#4d5d72"/>
<ellipse cx="43.5" cy="46.7" rx="1.3" ry="1.0" fill="#2f7cc4"/>
<ellipse cx="131.7" cy="30.2" rx="1.8" ry="0.5" fill="#2f7cc4"/>
<ellipse cx="47.0" cy="7.3" rx="1.4" ry="0.5" fill="#2f7cc4"/>
<ellipse cx="66.1" cy="4.2" rx="1.6" ry="0.9" fill="#2f7cc4"/>
<ellipse cx="110.7" cy="28.0" rx="0.9" ry="0.7" fill="#2f7cc4"/>
<ellipse cx="94.9" cy="51.3" rx="1.3" ry="0.7" fill="#2f7cc4"/>
<ellipse cx="60.8" cy="50.1" rx="1.7" ry="1.0" fill="#2f7cc4"/>
<ellipse cx="17.7" cy="24.6" rx="1.3" ry="0.7" fill="#2f7cc4"/>
<ellipse cx="66.5" cy="23.1" rx="0.8" ry="0.7" fill="#2f7cc4"/>
<ellipse cx="132.7" cy="8.0" rx="1.5" ry="0.6" fill="#2f7cc4"/>
<ellipse cx="96.8" cy="9.5" rx="1.2" ry="0.8" fill="#2f7cc4"/>
<ellipse cx="91.5" cy="8.6" rx="1.4" ry="1.0" fill="#2f7cc4"/>
<ellipse cx="39.4" cy="5.5" rx="1.7" ry="0.8" fill="#2f7cc4"/>
<ellipse cx="50.6" cy="48.7" rx="0.9" ry="1.2" fill="#2f7cc4"/>
<ellipse cx="106.6" cy="5.5" rx="0.7" ry="0.8" fill="#2f7cc4"/>
<ellipse cx="20.5" cy="29.7" rx="1.6" ry="0.8" fill="#2f7cc4"/>
<ellipse cx="84.3" cy="3.0" rx="1.1" ry="1.1" fill="#2f7cc4"/>
<ellipse cx="96.1" cy="9.0" rx="1.1" ry="0.7" fill="#2f7cc4"/>
<ellipse cx="19.6" cy="38.2" rx="1.6" ry="1.1" fill="#2f7cc4"/>
<ellipse cx="135.7" cy="4.9" rx="1.5" ry="0.9" fill="#2f7cc4"/>
<ellipse cx="47.1" cy="4.5" rx="0.7" ry="0.6" fill="#2f7cc4"/>
<ellipse cx="78.0" cy="21.4" rx="0.8" ry="1.1" fill="#2f7cc4"/>
<ellipse cx="99.8" cy="18.2" rx="0.7" ry="0.9" fill="#2f7cc4"/>
<ellipse cx="100.4" cy="48.9" rx="1.6" ry="0.8" fill="#2f7cc4"/>
<ellipse cx="134.8" cy="11.7" rx="1.4" ry="0.6" fill="#2f7cc4"/>
<ellipse cx="130.9" cy="11.9" rx="1.7" ry="1.0" fill="#2f7cc4"/>
<ellipse cx="23.3" cy="43.4" rx="1.6" ry="1.0" fill="#2f7cc4"/>
<ellipse cx="87.0" cy="4.9" rx="1.6" ry="0.7" fill="#2f7cc4"/>
<ellipse cx="32.3" cy="44.9" rx="1.1" ry="0.6" fill="#2f7cc4"/>
<ellipse cx="22.6" cy="57.2" rx="0.9" ry="0.6" fill="#2f7cc4"/>
<ellipse cx="106.1" cy="41.1" rx="0.8" ry="0.9" fill="#2f7cc4"/>
<ellipse cx="74.1" cy="28.1" rx="1.4" ry="0.6" fill="#2f7cc4"/>
<ellipse cx="38.1" cy="35.9" rx="1.3" ry="0.9" fill="#2f7cc4"/>
<ellipse cx="16.4" cy="14.1" rx="1.6" ry="0.9" fill="#2f7cc4"/>
<ellipse cx="72.4" cy="56.2" rx="1.2" ry="0.7" fill="#2f7cc4"/>
<ellipse cx="61.9" cy="12.8" rx="1.2" ry="1.0" fill="#2f7cc4"/>
<ellipse cx="21.7" cy="22.7" rx="1.2" ry="0.7" fill="#2f7cc4"/>
<ellipse cx="33.9" cy="40.9" rx="0.9" ry="0.6" fill="#2f7cc4"/>
<ellipse cx="137.6" cy="45.1" rx="1.7" ry="0.5" fill="#2f7cc4"/>
<ellipse cx="46.0" cy="36.0" rx="1.5" ry="0.5" fill="#2f7cc4"/>
<ellipse cx="118.1" cy="36.1" rx="1.8" ry="0.8" fill="#2f7cc4"/>
<ellipse cx="7.4" cy="24.2" rx="1.5" ry="0.8" fill="#2f7cc4"/>
<ellipse cx="79.3" cy="35.8" rx="1.3" ry="0.6" fill="#2f7cc4"/>
<ellipse cx="32.5" cy="53.6" rx="1.4" ry="0.8" fill="#2f7cc4"/>
<ellipse cx="20.5" cy="51.8" rx="0.8" ry="0.6" fill="#2f7cc4"/>
<ellipse cx="97.2" cy="22.0" rx="1.0" ry="0.7" fill="#2f7cc4"/>
<ellipse cx="45.8" cy="60.7" rx="1.6" ry="1.2" fill="#2f7cc4"/>
<ellipse cx="64.1" cy="6.7" rx="1.2" ry="0.8" fill="#2f7cc4"/>
<ellipse cx="84.6" cy="39.4" rx="1.6" ry="0.8" fill="#2f7cc4"/>
<ellipse cx="13.1" cy="38.6" rx="1.6" ry="0.6" fill="#2f7cc4"/>
<ellipse cx="79.7" cy="46.6" rx="0.9" ry="0.8" fill="#2f7cc4"/>
<ellipse cx="70.9" cy="22.9" rx="0.8" ry="0.6" fill="#2f7cc4"/>
<ellipse cx="80.1" cy="11.8" rx="0.8" ry="1.2" fill="#2f7cc4"/>
<ellipse cx="102.9" cy="15.1" rx="1.6" ry="1.1" fill="#2f7cc4"/>
<ellipse cx="131.3" cy="56.6" rx="1.3" ry="0.7" fill="#2f7cc4"/>
<ellipse cx="74.2" cy="25.9" rx="1.4" ry="0.7" fill="#2f7cc4"/>
<ellipse cx="103.4" cy="38.1" rx="0.9" ry="0.7" fill="#2f7cc4"/>
<ellipse cx="19.7" cy="7.2" rx="1.4" ry="1.2" fill="#2f7cc4"/>
<ellipse cx="19.4" cy="31.5" rx="1.3" ry="0.7" fill="#2f7cc4"/>
<ellipse cx="138.2" cy="7.8" rx="1.7" ry="1.0" fill="#2f7cc4"/>
<g fill="none" stroke-linecap="round">
<path d="M34,96 C38,84 42,70 44,56 C46,42 44,30 42,18" stroke="#d6ab9c" stroke-width="3.2"/>
<path d="M38,96 C48,86 58,76 66,64 C72,54 76,46 78,40" stroke="#dcb4a6" stroke-width="3"/>
<path d="M44,94 C56,84 66,76 76,68 C86,58 94,44 100,30" stroke="#c9a29e" stroke-width="2"/>
<path d="M44,56 C50,46 56,38 62,28" stroke="#c69c9a" stroke-width="1.4"/>
<path d="M88,78 C96,68 104,58 112,46" stroke="#bfa4aa" stroke-width="1.3"/>
<path d="M10,60 C16,48 22,38 28,26" stroke="#b8c0d0" stroke-width="1.1"/>
<path d="M112,76 C122,68 130,60 140,50" stroke="#b8aab6" stroke-width="1.1"/>
</g>
<ellipse cx="12" cy="68" rx="9" ry="5" fill="#dfe6f2" opacity="0.6"/>

<path d="M0,88 C25,84 55,88 85,84 C105,82 125,84 150,81" fill="none" stroke="#b9c8e0" stroke-width="1.6"/>
<path d="M50,97 C80,92 105,93 140,90" fill="none" stroke="#c8d4e8" stroke-width="1.2"/>
<path d="M28,96 C32,93 40,92 48,94" fill="none" stroke="#4a4a58" stroke-width="1.4"/>
<ellipse cx="92" cy="96" rx="6" ry="1.8" fill="#3a4656"/>
</g>
</svg>
<div class="abs" style="left:15px;top:112.5px;width:240px;font-size:14px;line-height:20px;color:#555;letter-spacing:0.1px">Subalpine Woodland in Kosciuszko National Park. <a>Auscape</a><br>Image 1 of 2.<br><a>View slideshow.</a></div></div>

<div id="scroll"><svg class="abs" style="left:0;top:0" width="15" height="960" viewBox="0 0 15 960">
<path d="M3,11 L12,11 L7.5,4.5Z" fill="#8a8a8a"/>
<rect x="3" y="18" width="9" height="452.5" rx="4.5" fill="#8a8a8a"/>
<path d="M3,948.5 L12,948.5 L7.5,955Z" fill="#8a8a8a"/>
</svg></div>
</body></html>
